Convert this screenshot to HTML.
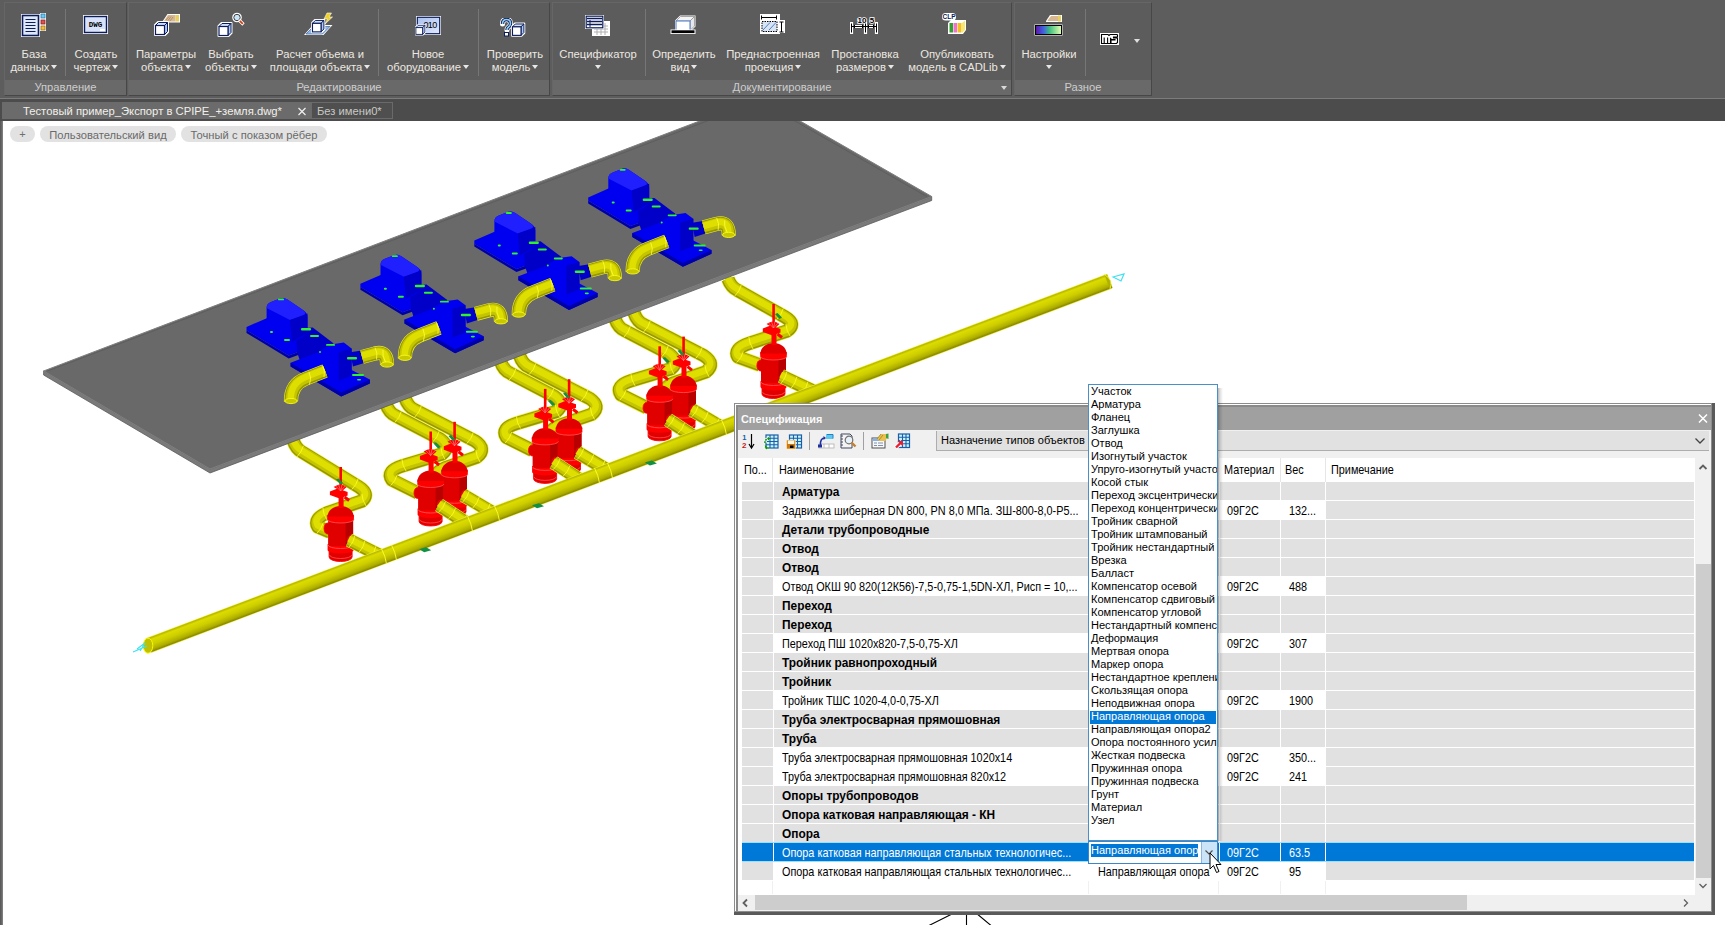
<!DOCTYPE html>
<html><head><meta charset="utf-8">
<style>
*{box-sizing:border-box}
html,body{margin:0;padding:0}
body{width:1725px;height:925px;overflow:hidden;position:relative;background:#fff;font-family:"Liberation Sans",sans-serif}
.a{position:absolute}
#ribbon{left:0;top:0;width:1725px;height:98px;background:#5d5d5d}
.panel{position:absolute;top:2px;height:94px;background:#5c5c5c;border:1px solid #474747;border-top-color:#666;border-left-color:#666}
.plabel{position:absolute;left:0;right:0;bottom:0;height:15px;background:#696969;color:#cdcdcd;font-size:11.2px;text-align:center;line-height:15px}
.btn{position:absolute;color:#ece8e0;font-size:11.25px;line-height:13px;text-align:center;white-space:nowrap}
.sep{position:absolute;top:9px;width:1px;height:67px;background:#767676}
.arr{display:inline-block;width:0;height:0;border-left:3.5px solid transparent;border-right:3.5px solid transparent;border-top:4px solid #e8e8e8;vertical-align:2px;margin-left:2px}
#tabbar{left:0;top:98px;width:1725px;height:23px;background:#4b4b4b;border-top:1px solid #7a7a7a}
.t11{font-size:10.85px;line-height:15px;white-space:nowrap;color:#000;transform:scaleY(1.1);transform-origin:0 0}
.tb{font-size:11.9px;font-weight:bold;line-height:15px;white-space:nowrap;color:#000}
.dd{font-size:11.05px;line-height:13px;white-space:nowrap;color:#000}
</style></head>
<body>
<div id="ribbon" class="a">
  <div class="panel" style="left:4px;width:123px"><div class="plabel">Управление</div></div>
  <div class="panel" style="left:128px;width:422px"><div class="plabel">Редактирование</div></div>
  <div class="panel" style="left:552px;width:460px"><div class="plabel">Документирование<span style="position:absolute;right:4px;top:6px;border-left:3.5px solid transparent;border-right:3.5px solid transparent;border-top:4px solid #d8d8d8"></span></div></div>
  <div class="panel" style="left:1014px;width:138px"><div class="plabel">Разное</div></div>
  <div class="sep" style="left:65px"></div>
  <div class="sep" style="left:378px"></div>
  <div class="sep" style="left:478px"></div>
  <div class="sep" style="left:645px"></div>
  <div class="sep" style="left:1085px"></div>

  <div class="btn" style="left:4px;width:60px;top:48px">База<br>данных<span class="arr"></span></div>
  <div class="btn" style="left:66px;width:60px;top:48px">Создать<br>чертеж<span class="arr"></span></div>
  <div class="btn" style="left:131px;width:70px;top:48px">Параметры<br>объекта<span class="arr"></span></div>
  <div class="btn" style="left:199px;width:64px;top:48px">Выбрать<br>объекты<span class="arr"></span></div>
  <div class="btn" style="left:260px;width:120px;top:48px">Расчет объема и<br>площади объекта<span class="arr"></span></div>
  <div class="btn" style="left:380px;width:96px;top:48px">Новое<br>оборудование<span class="arr"></span></div>
  <div class="btn" style="left:480px;width:70px;top:48px">Проверить<br>модель<span class="arr"></span></div>
  <div class="btn" style="left:553px;width:90px;top:48px">Спецификатор<br><span class="arr" style="margin-left:0"></span></div>
  <div class="btn" style="left:646px;width:76px;top:48px">Определить<br>вид<span class="arr"></span></div>
  <div class="btn" style="left:718px;width:110px;top:48px">Преднастроенная<br>проекция<span class="arr"></span></div>
  <div class="btn" style="left:820px;width:90px;top:48px">Простановка<br>размеров<span class="arr"></span></div>
  <div class="btn" style="left:902px;width:110px;top:48px">Опубликовать<br>модель в CADLib<span class="arr"></span></div>
  <div class="btn" style="left:1014px;width:70px;top:48px">Настройки<br><span class="arr" style="margin-left:0"></span></div>
  <span class="a" style="left:1134px;top:39px;border-left:3.5px solid transparent;border-right:3.5px solid transparent;border-top:4px solid #e0e0e0"></span>

  <!-- icons -->
  <svg class="a" style="left:20px;top:12px" width="28" height="27" viewBox="0 0 28 27">
    <rect x="1" y="2" width="19" height="23" fill="#fff"/>
    <rect x="2.5" y="3.5" width="16" height="20" fill="#dfe8f8" stroke="#0c1c5a" stroke-width="1.6"/>
    <path d="M5.5 7.5h10M5.5 10.5h10M5.5 13.5h10M5.5 16.5h10M5.5 19.5h10" stroke="#0c1c5a" stroke-width="1.2"/>
    <rect x="20" y="1" width="6" height="18" fill="#fff"/>
    <rect x="21" y="2" width="4" height="4" fill="#6cc8f0" stroke="#2a7ab0" stroke-width=".8"/>
    <rect x="21" y="8" width="4" height="4" fill="#e05050" stroke="#902020" stroke-width=".8"/>
    <rect x="21" y="14" width="4" height="4" fill="#f0c040" stroke="#a07010" stroke-width=".8"/>
  </svg>
  <svg class="a" style="left:83px;top:15px" width="26" height="20" viewBox="0 0 26 20">
    <rect x="0" y="0" width="25" height="19" fill="#fff"/>
    <rect x="1.5" y="1.5" width="22" height="16" fill="#d8e2f8" stroke="#0c1c5a" stroke-width="1.4"/>
    <text x="12.5" y="12" font-family="Liberation Mono" font-weight="bold" font-size="7.5" text-anchor="middle" fill="#000">DWG</text>
    <rect x="17" y="14" width="5" height="2" fill="#fff"/>
  </svg>
  <svg class="a" style="left:153px;top:12px" width="28" height="25" viewBox="0 0 28 25">
    <path d="M9.5 9.5 L14.5 2 H27 V10.5 H11Z" fill="#fff"/>
    <path d="M11 9 L15 3 H22.5 V9.5 H12Z" fill="#d8b890"/>
    <path d="M13 8 L16 4.5 M15 8.5 L18 4.5 M17 9 L20 5" stroke="#a08060" stroke-width=".7"/>
    <rect x="22.5" y="3" width="3.5" height="6.5" fill="#e8d060"/>
    <g transform="translate(2,10) scale(1.0)">
    <polygon points="0,3 3,0 13,0 13,10 10,13 0,13" fill="#fff" stroke="#fff" stroke-width="2" stroke-linejoin="round"/>
    <polygon points="0.5,3.5 3.5,0.5 12.5,0.5 9.5,3.5" fill="#d0e0f8" stroke="#0c1c5a" stroke-width="1"/>
    <polygon points="9.5,3.5 12.5,0.5 12.5,9.5 9.5,12.5" fill="#b0c8f0" stroke="#0c1c5a" stroke-width="1"/>
    <rect x="0.5" y="3.5" width="9" height="9" fill="#fff" stroke="#0c1c5a" stroke-width="1.2"/>
  </g>
  </svg>
  <svg class="a" style="left:217px;top:12px" width="28" height="25" viewBox="0 0 28 25">
    <circle cx="20" cy="5.5" r="4.8" fill="#fff"/>
    <circle cx="20" cy="5.5" r="3.2" fill="#c8e4f8" stroke="#404040" stroke-width="1"/>
    <path d="M22 8 L26.5 12.5" stroke="#fff" stroke-width="3.2"/>
    <path d="M22.8 8.8 L25.8 11.8" stroke="#d04010" stroke-width="1.8"/>
    <g transform="translate(1.5,11) scale(1.0)">
    <polygon points="0,3 3,0 13,0 13,10 10,13 0,13" fill="#fff" stroke="#fff" stroke-width="2" stroke-linejoin="round"/>
    <polygon points="0.5,3.5 3.5,0.5 12.5,0.5 9.5,3.5" fill="#d0e0f8" stroke="#0c1c5a" stroke-width="1"/>
    <polygon points="9.5,3.5 12.5,0.5 12.5,9.5 9.5,12.5" fill="#b0c8f0" stroke="#0c1c5a" stroke-width="1"/>
    <rect x="0.5" y="3.5" width="9" height="9" fill="#fff" stroke="#0c1c5a" stroke-width="1.2"/>
  </g>
  </svg>
  <svg class="a" style="left:304px;top:12px" width="30" height="24" viewBox="0 0 30 24">
    <path d="M0 23 L9 13 H28.5 L19.5 23Z" fill="#fff"/>
    <path d="M2 22 L9.5 14.5 H26 L18.5 22Z" fill="#90b8f0" stroke="#5070a0" stroke-width=".8"/>
    <g transform="translate(8,8) scale(0.95)">
    <polygon points="0,3 3,0 13,0 13,10 10,13 0,13" fill="#fff" stroke="#fff" stroke-width="2" stroke-linejoin="round"/>
    <polygon points="0.5,3.5 3.5,0.5 12.5,0.5 9.5,3.5" fill="#d0e0f8" stroke="#0c1c5a" stroke-width="1"/>
    <polygon points="9.5,3.5 12.5,0.5 12.5,9.5 9.5,12.5" fill="#b0c8f0" stroke="#0c1c5a" stroke-width="1"/>
    <rect x="0.5" y="3.5" width="9" height="9" fill="#fff" stroke="#0c1c5a" stroke-width="1.2"/>
  </g>
    <path d="M23 1 L27.5 1 L25 5 H28.5 L21 12 L23.5 7 H20Z" fill="#f0d020" stroke="#fff" stroke-width=".6"/>
  </svg>
  <svg class="a" style="left:415px;top:16px" width="27" height="20" viewBox="0 0 27 20">
    <rect x="1" y="0" width="25" height="19" fill="#fff"/>
    <defs><linearGradient id="g010" x1="0" y1="0" x2="1" y2="1"><stop offset="0" stop-color="#a8c0f0"/><stop offset="1" stop-color="#e0e8fc"/></linearGradient></defs>
    <rect x="2.3" y="1.3" width="22.4" height="16.4" fill="url(#g010)" stroke="#0c1c5a" stroke-width="1.2"/>
    <text x="15" y="11.5" font-family="Liberation Sans" font-size="9" text-anchor="middle" fill="#000" letter-spacing="-0.6">010</text>
    <g transform="translate(0.5,9) scale(0.75)">
    <polygon points="0,3 3,0 13,0 13,10 10,13 0,13" fill="#fff" stroke="#fff" stroke-width="2" stroke-linejoin="round"/>
    <polygon points="0.5,3.5 3.5,0.5 12.5,0.5 9.5,3.5" fill="#d0e0f8" stroke="#0c1c5a" stroke-width="1"/>
    <polygon points="9.5,3.5 12.5,0.5 12.5,9.5 9.5,12.5" fill="#b0c8f0" stroke="#0c1c5a" stroke-width="1"/>
    <rect x="0.5" y="3.5" width="9" height="9" fill="#fff" stroke="#0c1c5a" stroke-width="1.2"/>
  </g>
  </svg>
  <svg class="a" style="left:500px;top:18px" width="27" height="20" viewBox="0 0 27 20">
    <path d="M2.5 6 Q2.5 1.5 6.5 1.5 Q10.5 1.5 10.5 5.5 Q10.5 8 8 9.5 Q7 10.2 7 12" fill="none" stroke="#fff" stroke-width="5" stroke-linecap="round"/>
    <path d="M2.5 6 Q2.5 1.5 6.5 1.5 Q10.5 1.5 10.5 5.5 Q10.5 8 8 9.5 Q7 10.2 7 12" fill="none" stroke="#0c1c5a" stroke-width="3.4" stroke-linecap="butt"/>
    <path d="M2.5 6 Q2.5 1.5 6.5 1.5 Q10.5 1.5 10.5 5.5 Q10.5 8 8 9.5 Q7 10.2 7 12" fill="none" stroke="#90d0f0" stroke-width="1.6"/>
    <rect x="4.5" y="14.5" width="4" height="3.5" fill="#fff" stroke="#0c1c5a" stroke-width="1"/>
    <g transform="translate(12,5.5) scale(0.95)">
    <polygon points="0,3 3,0 13,0 13,10 10,13 0,13" fill="#fff" stroke="#fff" stroke-width="2" stroke-linejoin="round"/>
    <polygon points="0.5,3.5 3.5,0.5 12.5,0.5 9.5,3.5" fill="#d0e0f8" stroke="#0c1c5a" stroke-width="1"/>
    <polygon points="9.5,3.5 12.5,0.5 12.5,9.5 9.5,12.5" fill="#b0c8f0" stroke="#0c1c5a" stroke-width="1"/>
    <rect x="0.5" y="3.5" width="9" height="9" fill="#fff" stroke="#0c1c5a" stroke-width="1.2"/>
  </g>
  </svg>
  <svg class="a" style="left:585px;top:15px" width="25" height="21" viewBox="0 0 25 21">
    <rect x="7" y="6" width="18" height="15" fill="#fff"/>
    <path d="M9 11h14M9 14h14M9 17h14M12 8v12M16 8v12M20 8v12" stroke="#b0b0b0" stroke-width="1"/>
    <rect x="0" y="0" width="19" height="14" fill="#fff"/>
    <rect x="1.2" y="1.2" width="16.6" height="11.6" fill="#fff" stroke="#0c1c5a" stroke-width="1.2"/>
    <path d="M2 3.5h15M2 6.5h15M2 9.5h15" stroke="#0c1c5a" stroke-width="1.6"/>
    <path d="M5 5v7" stroke="#0c1c5a" stroke-width="1"/>
  </svg>
  <svg class="a" style="left:670px;top:15px" width="26" height="19" viewBox="0 0 26 19">
    <path d="M6 14 L6 6 L10.5 1.5 H24.5 V11 L20 15.5Z" fill="#fff" stroke="#fff" stroke-width="2"/>
    <path d="M6 6 L10.5 1.5 H24.5 L20 6Z" fill="#f4f4f4" stroke="#909090" stroke-width=".8"/>
    <path d="M20 6 L24.5 1.5 V11 L20 15.5Z" fill="#e8e8e8" stroke="#909090" stroke-width=".8"/>
    <rect x="6" y="6" width="14" height="9.5" fill="#fff" stroke="#4878c8" stroke-width="1"/>
    <rect x="0.5" y="14.5" width="25" height="4.5" fill="#fff"/>
    <rect x="1.5" y="15.3" width="23" height="2.8" fill="#000"/>
  </svg>
  <svg class="a" style="left:760px;top:14px" width="25" height="20" viewBox="0 0 25 20">
    <rect x="0" y="0" width="20" height="20" fill="#fff"/>
    <rect x="19" y="6" width="6" height="13" fill="#fff"/>
    <path d="M1.5 3.5h15M1.5 1.5v4M16.5 1.5v4" stroke="#000" stroke-width="1"/>
    <rect x="2" y="7.5" width="15" height="10" fill="#d8e4f4" stroke="#000" stroke-width="1" stroke-dasharray="1.5 1"/>
    <path d="M3 16 L10 8.5 M9 16 L16 8.5" stroke="#5080c0" stroke-width="1"/>
    <path d="M21.5 8v10M19.5 8h4M19.5 18h4" stroke="#000" stroke-width="1"/>
  </svg>
  <svg class="a" style="left:850px;top:15px" width="28" height="19" viewBox="0 0 28 19">
    <g stroke="#fff" stroke-width="3.2" fill="none" stroke-linecap="square">
      <path d="M1.5 8.5v9M15.5 8.5v9M26.5 8.5v9M2 11.5h13M16 11.5h10"/>
    </g>
    <text x="12" y="7.5" font-family="Liberation Sans" font-weight="bold" font-size="8" text-anchor="middle" fill="#000" stroke="#fff" stroke-width="1.6" paint-order="stroke">10</text>
    <text x="22" y="7.5" font-family="Liberation Sans" font-weight="bold" font-size="8" text-anchor="middle" fill="#000" stroke="#fff" stroke-width="1.6" paint-order="stroke">5</text>
    <path d="M1.5 8.5v9M15.5 8.5v9M26.5 8.5v9M2 11.5h13M16 11.5h10" stroke="#000" stroke-width="1"/>
    <path d="M2 11.5 L5 9.5 V13.5Z M15 11.5 L12 9.5 V13.5Z M16 11.5 L19 9.5 V13.5Z M26 11.5 L23 9.5 V13.5Z" fill="#000"/>
  </svg>
  <svg class="a" style="left:942px;top:13px" width="26" height="22" viewBox="0 0 26 22">
    <rect x="0" y="0" width="14" height="7.5" rx="3.5" fill="#fff"/>
    <text x="7" y="6.3" font-family="Liberation Sans" font-weight="bold" font-size="6.5" text-anchor="middle" fill="#0c1c5a">CLP</text>
    <path d="M6 10 L9 7 H24 V17 L21 21 H6Z" fill="#fff"/>
    <rect x="7.5" y="10" width="3.5" height="9.5" fill="#30a030"/>
    <rect x="11.5" y="10" width="3.5" height="9.5" fill="#f070d0"/>
    <rect x="15.5" y="10" width="4" height="9.5" fill="#f0c020"/>
    <path d="M20 10 L23 7.5 V17 L20 20Z" fill="#f8e870"/>
  </svg>
  <svg class="a" style="left:1034px;top:12px" width="29" height="24" viewBox="0 0 29 24">
    <path d="M12 9 L16 3 H28 V10 H12Z" fill="#fff"/>
    <path d="M13.5 8.5 L17 4 H24 V9 H14Z" fill="#d8b890"/>
    <rect x="24" y="3.5" width="3" height="6" fill="#e8d060"/>
    <rect x="0.5" y="12.5" width="28" height="11" fill="#fff"/>
    <defs><linearGradient id="gr" x1="0" x2="1"><stop offset="0" stop-color="#6010a0"/><stop offset=".3" stop-color="#4060e0"/><stop offset=".55" stop-color="#40c080"/><stop offset="1" stop-color="#e8ffb0"/></linearGradient></defs>
    <rect x="1.5" y="13.5" width="26" height="9" fill="url(#gr)" stroke="#000" stroke-width="1"/>
  </svg>
  <svg class="a" style="left:1100px;top:33px" width="19" height="12" viewBox="0 0 19 12">
    <rect x="0" y="0" width="19" height="12" fill="#fff"/>
    <path d="M1.5 1.5 H8 L9 2.5 L10 1.5 H17 L17.5 2 V4 H13.5 V5 H17 L17.5 5.5 V9.5 L16.5 10.5 H11 V7 H15 V6.5 H11.5 L10.5 5.5 V10.5 H1.5Z" fill="#fff" stroke="#000" stroke-width="1.1" stroke-linejoin="miter"/>
    <path d="M4.2 4.5 V10.5 M7.6 4.5 V10.5" stroke="#000" stroke-width="1.1"/>
  </svg>
</div>

<div class="a" style="left:0;top:98px;width:1725px;height:1px;background:#7c7c7c"></div>
<div class="a" style="left:0;top:99px;width:1725px;height:22px;background:#4c4c4c"></div>
<div class="a" style="left:2px;top:102px;width:309px;height:17px;background:#6b6b6b;color:#f2f0ea;font-size:11.25px;line-height:19px;padding-left:21px;white-space:nowrap">Тестовый пример_Экспорт в CPIPE_+земля.dwg*</div>
<svg class="a" style="left:297px;top:107px" width="10" height="9" viewBox="0 0 10 9"><path d="M1.5 1 L8.5 8 M8.5 1 L1.5 8" stroke="#f0f0f0" stroke-width="1.2"/></svg>
<div class="a" style="left:311px;top:102px;width:82px;height:17px;background:#4f4f4f;border:1px solid #6a6a6a;color:#c8c8c4;font-size:11.2px;line-height:17px;padding-left:5px;white-space:nowrap">Без имени0*</div>
<div class="a" style="left:0;top:121px;width:3px;height:804px;background:linear-gradient(90deg,#555,#6a6a6a 60%,#8a8a8a)"></div>
<div class="a" style="left:10px;top:126px;width:25px;height:16px;border-radius:8px;background:#e2e2e2;color:#707070;font-size:11px;line-height:17px;text-align:center">+</div>
<div class="a" style="left:40px;top:126px;width:136px;height:16px;border-radius:8px;background:#e2e2e2;color:#6a6a6a;font-size:11.2px;line-height:18px;text-align:center;white-space:nowrap">Пользовательский вид</div>
<div class="a" style="left:181px;top:126px;width:146px;height:16px;border-radius:8px;background:#e2e2e2;color:#6a6a6a;font-size:11.2px;line-height:18px;text-align:center;white-space:nowrap">Точный с показом рёбер</div>
<svg class="a" style="left:0;top:0" width="1725" height="925" viewBox="0 0 1725 925">
<defs><clipPath id="cv"><rect x="3" y="121" width="1722" height="804"/></clipPath></defs>
<g clip-path="url(#cv)">
<g transform="translate(229.0,-85.2)">
<path d="M405,398 Q408,407 415,410 L475,441 Q487,449 477,457 L445,468 Q431,474 437,482 L445,487" fill="none" stroke="#ecec30" stroke-width="14.2" stroke-linejoin="round"/><path d="M405,398 Q408,407 415,410 L475,441 Q487,449 477,457 L445,468 Q431,474 437,482 L445,487" fill="none" stroke="#969600" stroke-width="13" stroke-linejoin="round"/><path d="M405,398 Q408,407 415,410 L475,441 Q487,449 477,457 L445,468 Q431,474 437,482 L445,487" fill="none" stroke="#c4c400" stroke-width="10.6" stroke-linejoin="round" transform="translate(0,-0.4)"/><path d="M405,398 Q408,407 415,410 L475,441 Q487,449 477,457 L445,468 Q431,474 437,482 L445,487" fill="none" stroke="#dede00" stroke-width="6.5" stroke-linejoin="round" transform="translate(-0.3,-1.4)"/>
<path d="M421.3,405.9 Q419.6,412.4 414.7,417.1" stroke="#ffff30" stroke-width="0.8" fill="none"/>
<path d="M473.3,432.4 Q471.6,438.9 466.7,443.6" stroke="#ffff30" stroke-width="0.8" fill="none"/>
<path d="M480.1,462.1 Q476.3,456.6 475.9,449.9" stroke="#ffff30" stroke-width="0.8" fill="none"/>
<path d="M386,404 Q389,413 396,416 L440,439 Q451,447 442,454 L402,466 Q386,471 392,480 L418,493" fill="none" stroke="#ecec30" stroke-width="14.2" stroke-linejoin="round"/><path d="M386,404 Q389,413 396,416 L440,439 Q451,447 442,454 L402,466 Q386,471 392,480 L418,493" fill="none" stroke="#969600" stroke-width="13" stroke-linejoin="round"/><path d="M386,404 Q389,413 396,416 L440,439 Q451,447 442,454 L402,466 Q386,471 392,480 L418,493" fill="none" stroke="#c4c400" stroke-width="10.6" stroke-linejoin="round" transform="translate(0,-0.4)"/><path d="M386,404 Q389,413 396,416 L440,439 Q451,447 442,454 L402,466 Q386,471 392,480 L418,493" fill="none" stroke="#dede00" stroke-width="6.5" stroke-linejoin="round" transform="translate(-0.3,-1.4)"/>
<path d="M401.3,411.4 Q399.6,417.9 394.7,422.6" stroke="#ffff30" stroke-width="0.8" fill="none"/>
<path d="M439.3,430.9 Q437.6,437.4 432.7,442.1" stroke="#ffff30" stroke-width="0.8" fill="none"/>
<path d="M445.1,459.6 Q441.3,454.1 440.9,447.4" stroke="#ffff30" stroke-width="0.8" fill="none"/>
<path d="M406.1,471.1 Q402.3,465.6 401.9,458.9" stroke="#ffff30" stroke-width="0.8" fill="none"/>
<path d="M397.3,474.4 Q395.6,480.9 390.7,485.6" stroke="#ffff30" stroke-width="0.8" fill="none"/>
<ellipse cx="441.5" cy="483.3" rx="3.6" ry="5.5" fill="#e00000" stroke="#ff0000" stroke-width="0.8"/>
<path d="M443.0,504.8 h23 v7 a11.5,4.5 0 0 1 -23,0 z" fill="#e00000" stroke="#ff0000" stroke-width="0.9"/>
<path d="M441.5,498.8 h26 v6 a13,3.5 0 0 1 -26,0 z" fill="#ff0000"/>
<path d="M443.5,509.8 a11,3.5 0 0 0 22,0" fill="none" stroke="#ff5050" stroke-width="0.8"/>
<rect x="442.0" y="473.8" width="25" height="27" fill="#e00000"/>
<rect x="459.5" y="473.8" width="7.5" height="27" fill="#b80000"/>
<path d="M442.0,499.8 a12.5,3.5 0 0 0 25,0" fill="none" stroke="#ff5050" stroke-width="0.9"/>
<path d="M441.2,469.8 h26.6 v4.5 a13.3,3.5 0 0 1 -26.6,0 z" fill="#ff0000"/>
<path d="M441.2,474.3 a13.3,3.5 0 0 0 26.6,0" fill="none" stroke="#ff6060" stroke-width="0.7"/>
<path d="M441.5,471.3 a13,10.5 0 0 1 26,0 z" fill="#e00000"/>
<path d="M441.5,471.3 a13,3.5 0 0 0 26,0" fill="none" stroke="#ff0000" stroke-width="1"/>
<ellipse cx="465.0" cy="495.3" rx="3.8" ry="5" fill="#e00000" stroke="#ff0000" stroke-width="0.8"/>
<rect x="452.5" y="449.8" width="5" height="13" fill="#ff0000"/>
<rect x="453.3" y="421.8" width="2.6" height="30" fill="#ff0000"/>
<polygon points="443.8,446.3 451.5,443.3 461.5,446.8 461.5,450.3 453.5,453.3 443.8,449.8" fill="#ff0000"/>
<path d="M458.5,451.8 L463.0,455.3" stroke="#ff0000" stroke-width="3"/>
<path d="M447.5,441.8 Q454.5,436.8 460.5,441.8 L455.5,446.3 Z" fill="#ff0000"/>
<path d="M449.5,440.8 L454.5,445.8 M452.5,439.3 L454.5,445.8 M456.0,439.3 L454.5,445.8 M459.0,440.8 L454.5,445.8" stroke="#ff9090" stroke-width="0.6"/>
<path d="M463,495 L495,514" fill="none" stroke="#ecec30" stroke-width="14.2" stroke-linejoin="round"/><path d="M463,495 L495,514" fill="none" stroke="#969600" stroke-width="13" stroke-linejoin="round"/><path d="M463,495 L495,514" fill="none" stroke="#c4c400" stroke-width="10.6" stroke-linejoin="round" transform="translate(0,-0.4)"/><path d="M463,495 L495,514" fill="none" stroke="#dede00" stroke-width="6.5" stroke-linejoin="round" transform="translate(-0.3,-1.4)"/>
<path d="M469.3,490.9 Q467.5,497.4 462.7,502.1" stroke="#ffff30" stroke-width="0.8" fill="none"/>
<path d="M479.3,496.9 Q477.5,503.4 472.7,508.1" stroke="#ffff30" stroke-width="0.8" fill="none"/>
<path d="M490.3,503.4 Q488.5,509.9 483.7,514.6" stroke="#ffff30" stroke-width="0.8" fill="none"/>
<ellipse cx="417.6" cy="493.0" rx="3.6" ry="5.5" fill="#e00000" stroke="#ff0000" stroke-width="0.8"/>
<path d="M419.1,514.5 h23 v7 a11.5,4.5 0 0 1 -23,0 z" fill="#e00000" stroke="#ff0000" stroke-width="0.9"/>
<path d="M417.6,508.5 h26 v6 a13,3.5 0 0 1 -26,0 z" fill="#ff0000"/>
<path d="M419.6,519.5 a11,3.5 0 0 0 22,0" fill="none" stroke="#ff5050" stroke-width="0.8"/>
<rect x="418.1" y="483.5" width="25" height="27" fill="#e00000"/>
<rect x="435.6" y="483.5" width="7.5" height="27" fill="#b80000"/>
<path d="M418.1,509.5 a12.5,3.5 0 0 0 25,0" fill="none" stroke="#ff5050" stroke-width="0.9"/>
<path d="M417.3,479.5 h26.6 v4.5 a13.3,3.5 0 0 1 -26.6,0 z" fill="#ff0000"/>
<path d="M417.3,484.0 a13.3,3.5 0 0 0 26.6,0" fill="none" stroke="#ff6060" stroke-width="0.7"/>
<path d="M417.6,481.0 a13,10.5 0 0 1 26,0 z" fill="#e00000"/>
<path d="M417.6,481.0 a13,3.5 0 0 0 26,0" fill="none" stroke="#ff0000" stroke-width="1"/>
<ellipse cx="441.1" cy="505.0" rx="3.8" ry="5" fill="#e00000" stroke="#ff0000" stroke-width="0.8"/>
<rect x="428.6" y="459.5" width="5" height="13" fill="#ff0000"/>
<rect x="429.40000000000003" y="431.5" width="2.6" height="30" fill="#ff0000"/>
<polygon points="419.90000000000003,456.0 427.6,453.0 437.6,456.5 437.6,460.0 429.6,463.0 419.90000000000003,459.5" fill="#ff0000"/>
<path d="M434.6,461.5 L439.1,465.0" stroke="#ff0000" stroke-width="3"/>
<path d="M423.6,451.5 Q430.6,446.5 436.6,451.5 L431.6,456.0 Z" fill="#ff0000"/>
<path d="M425.6,450.5 L430.6,455.5 M428.6,449.0 L430.6,455.5 M432.1,449.0 L430.6,455.5 M435.1,450.5 L430.6,455.5" stroke="#ff9090" stroke-width="0.6"/>
<path d="M439,505 L471,526" fill="none" stroke="#ecec30" stroke-width="14.2" stroke-linejoin="round"/><path d="M439,505 L471,526" fill="none" stroke="#969600" stroke-width="13" stroke-linejoin="round"/><path d="M439,505 L471,526" fill="none" stroke="#c4c400" stroke-width="10.6" stroke-linejoin="round" transform="translate(0,-0.4)"/><path d="M439,505 L471,526" fill="none" stroke="#dede00" stroke-width="6.5" stroke-linejoin="round" transform="translate(-0.3,-1.4)"/>
<path d="M445.5,501.6 Q443.5,508.0 438.5,512.4" stroke="#ffff30" stroke-width="0.8" fill="none"/>
<path d="M455.5,508.1 Q453.5,514.5 448.5,518.9" stroke="#ffff30" stroke-width="0.8" fill="none"/>
<path d="M466.5,515.1 Q464.5,521.5 459.5,525.9" stroke="#ffff30" stroke-width="0.8" fill="none"/>
</g>
<g transform="translate(114.5,-42.6)">
<path d="M405,398 Q408,407 415,410 L475,441 Q487,449 477,457 L445,468 Q431,474 437,482 L445,487" fill="none" stroke="#ecec30" stroke-width="14.2" stroke-linejoin="round"/><path d="M405,398 Q408,407 415,410 L475,441 Q487,449 477,457 L445,468 Q431,474 437,482 L445,487" fill="none" stroke="#969600" stroke-width="13" stroke-linejoin="round"/><path d="M405,398 Q408,407 415,410 L475,441 Q487,449 477,457 L445,468 Q431,474 437,482 L445,487" fill="none" stroke="#c4c400" stroke-width="10.6" stroke-linejoin="round" transform="translate(0,-0.4)"/><path d="M405,398 Q408,407 415,410 L475,441 Q487,449 477,457 L445,468 Q431,474 437,482 L445,487" fill="none" stroke="#dede00" stroke-width="6.5" stroke-linejoin="round" transform="translate(-0.3,-1.4)"/>
<path d="M421.3,405.9 Q419.6,412.4 414.7,417.1" stroke="#ffff30" stroke-width="0.8" fill="none"/>
<path d="M473.3,432.4 Q471.6,438.9 466.7,443.6" stroke="#ffff30" stroke-width="0.8" fill="none"/>
<path d="M480.1,462.1 Q476.3,456.6 475.9,449.9" stroke="#ffff30" stroke-width="0.8" fill="none"/>
<path d="M386,404 Q389,413 396,416 L440,439 Q451,447 442,454 L402,466 Q386,471 392,480 L418,493" fill="none" stroke="#ecec30" stroke-width="14.2" stroke-linejoin="round"/><path d="M386,404 Q389,413 396,416 L440,439 Q451,447 442,454 L402,466 Q386,471 392,480 L418,493" fill="none" stroke="#969600" stroke-width="13" stroke-linejoin="round"/><path d="M386,404 Q389,413 396,416 L440,439 Q451,447 442,454 L402,466 Q386,471 392,480 L418,493" fill="none" stroke="#c4c400" stroke-width="10.6" stroke-linejoin="round" transform="translate(0,-0.4)"/><path d="M386,404 Q389,413 396,416 L440,439 Q451,447 442,454 L402,466 Q386,471 392,480 L418,493" fill="none" stroke="#dede00" stroke-width="6.5" stroke-linejoin="round" transform="translate(-0.3,-1.4)"/>
<path d="M401.3,411.4 Q399.6,417.9 394.7,422.6" stroke="#ffff30" stroke-width="0.8" fill="none"/>
<path d="M439.3,430.9 Q437.6,437.4 432.7,442.1" stroke="#ffff30" stroke-width="0.8" fill="none"/>
<path d="M445.1,459.6 Q441.3,454.1 440.9,447.4" stroke="#ffff30" stroke-width="0.8" fill="none"/>
<path d="M406.1,471.1 Q402.3,465.6 401.9,458.9" stroke="#ffff30" stroke-width="0.8" fill="none"/>
<path d="M397.3,474.4 Q395.6,480.9 390.7,485.6" stroke="#ffff30" stroke-width="0.8" fill="none"/>
<ellipse cx="441.5" cy="483.3" rx="3.6" ry="5.5" fill="#e00000" stroke="#ff0000" stroke-width="0.8"/>
<path d="M443.0,504.8 h23 v7 a11.5,4.5 0 0 1 -23,0 z" fill="#e00000" stroke="#ff0000" stroke-width="0.9"/>
<path d="M441.5,498.8 h26 v6 a13,3.5 0 0 1 -26,0 z" fill="#ff0000"/>
<path d="M443.5,509.8 a11,3.5 0 0 0 22,0" fill="none" stroke="#ff5050" stroke-width="0.8"/>
<rect x="442.0" y="473.8" width="25" height="27" fill="#e00000"/>
<rect x="459.5" y="473.8" width="7.5" height="27" fill="#b80000"/>
<path d="M442.0,499.8 a12.5,3.5 0 0 0 25,0" fill="none" stroke="#ff5050" stroke-width="0.9"/>
<path d="M441.2,469.8 h26.6 v4.5 a13.3,3.5 0 0 1 -26.6,0 z" fill="#ff0000"/>
<path d="M441.2,474.3 a13.3,3.5 0 0 0 26.6,0" fill="none" stroke="#ff6060" stroke-width="0.7"/>
<path d="M441.5,471.3 a13,10.5 0 0 1 26,0 z" fill="#e00000"/>
<path d="M441.5,471.3 a13,3.5 0 0 0 26,0" fill="none" stroke="#ff0000" stroke-width="1"/>
<ellipse cx="465.0" cy="495.3" rx="3.8" ry="5" fill="#e00000" stroke="#ff0000" stroke-width="0.8"/>
<rect x="452.5" y="449.8" width="5" height="13" fill="#ff0000"/>
<rect x="453.3" y="421.8" width="2.6" height="30" fill="#ff0000"/>
<polygon points="443.8,446.3 451.5,443.3 461.5,446.8 461.5,450.3 453.5,453.3 443.8,449.8" fill="#ff0000"/>
<path d="M458.5,451.8 L463.0,455.3" stroke="#ff0000" stroke-width="3"/>
<path d="M447.5,441.8 Q454.5,436.8 460.5,441.8 L455.5,446.3 Z" fill="#ff0000"/>
<path d="M449.5,440.8 L454.5,445.8 M452.5,439.3 L454.5,445.8 M456.0,439.3 L454.5,445.8 M459.0,440.8 L454.5,445.8" stroke="#ff9090" stroke-width="0.6"/>
<path d="M463,495 L495,514" fill="none" stroke="#ecec30" stroke-width="14.2" stroke-linejoin="round"/><path d="M463,495 L495,514" fill="none" stroke="#969600" stroke-width="13" stroke-linejoin="round"/><path d="M463,495 L495,514" fill="none" stroke="#c4c400" stroke-width="10.6" stroke-linejoin="round" transform="translate(0,-0.4)"/><path d="M463,495 L495,514" fill="none" stroke="#dede00" stroke-width="6.5" stroke-linejoin="round" transform="translate(-0.3,-1.4)"/>
<path d="M469.3,490.9 Q467.5,497.4 462.7,502.1" stroke="#ffff30" stroke-width="0.8" fill="none"/>
<path d="M479.3,496.9 Q477.5,503.4 472.7,508.1" stroke="#ffff30" stroke-width="0.8" fill="none"/>
<path d="M490.3,503.4 Q488.5,509.9 483.7,514.6" stroke="#ffff30" stroke-width="0.8" fill="none"/>
<ellipse cx="417.6" cy="493.0" rx="3.6" ry="5.5" fill="#e00000" stroke="#ff0000" stroke-width="0.8"/>
<path d="M419.1,514.5 h23 v7 a11.5,4.5 0 0 1 -23,0 z" fill="#e00000" stroke="#ff0000" stroke-width="0.9"/>
<path d="M417.6,508.5 h26 v6 a13,3.5 0 0 1 -26,0 z" fill="#ff0000"/>
<path d="M419.6,519.5 a11,3.5 0 0 0 22,0" fill="none" stroke="#ff5050" stroke-width="0.8"/>
<rect x="418.1" y="483.5" width="25" height="27" fill="#e00000"/>
<rect x="435.6" y="483.5" width="7.5" height="27" fill="#b80000"/>
<path d="M418.1,509.5 a12.5,3.5 0 0 0 25,0" fill="none" stroke="#ff5050" stroke-width="0.9"/>
<path d="M417.3,479.5 h26.6 v4.5 a13.3,3.5 0 0 1 -26.6,0 z" fill="#ff0000"/>
<path d="M417.3,484.0 a13.3,3.5 0 0 0 26.6,0" fill="none" stroke="#ff6060" stroke-width="0.7"/>
<path d="M417.6,481.0 a13,10.5 0 0 1 26,0 z" fill="#e00000"/>
<path d="M417.6,481.0 a13,3.5 0 0 0 26,0" fill="none" stroke="#ff0000" stroke-width="1"/>
<ellipse cx="441.1" cy="505.0" rx="3.8" ry="5" fill="#e00000" stroke="#ff0000" stroke-width="0.8"/>
<rect x="428.6" y="459.5" width="5" height="13" fill="#ff0000"/>
<rect x="429.40000000000003" y="431.5" width="2.6" height="30" fill="#ff0000"/>
<polygon points="419.90000000000003,456.0 427.6,453.0 437.6,456.5 437.6,460.0 429.6,463.0 419.90000000000003,459.5" fill="#ff0000"/>
<path d="M434.6,461.5 L439.1,465.0" stroke="#ff0000" stroke-width="3"/>
<path d="M423.6,451.5 Q430.6,446.5 436.6,451.5 L431.6,456.0 Z" fill="#ff0000"/>
<path d="M425.6,450.5 L430.6,455.5 M428.6,449.0 L430.6,455.5 M432.1,449.0 L430.6,455.5 M435.1,450.5 L430.6,455.5" stroke="#ff9090" stroke-width="0.6"/>
<path d="M439,505 L471,526" fill="none" stroke="#ecec30" stroke-width="14.2" stroke-linejoin="round"/><path d="M439,505 L471,526" fill="none" stroke="#969600" stroke-width="13" stroke-linejoin="round"/><path d="M439,505 L471,526" fill="none" stroke="#c4c400" stroke-width="10.6" stroke-linejoin="round" transform="translate(0,-0.4)"/><path d="M439,505 L471,526" fill="none" stroke="#dede00" stroke-width="6.5" stroke-linejoin="round" transform="translate(-0.3,-1.4)"/>
<path d="M445.5,501.6 Q443.5,508.0 438.5,512.4" stroke="#ffff30" stroke-width="0.8" fill="none"/>
<path d="M455.5,508.1 Q453.5,514.5 448.5,518.9" stroke="#ffff30" stroke-width="0.8" fill="none"/>
<path d="M466.5,515.1 Q464.5,521.5 459.5,525.9" stroke="#ffff30" stroke-width="0.8" fill="none"/>
</g>
<g transform="translate(0.0,0.0)">
<path d="M405,398 Q408,407 415,410 L475,441 Q487,449 477,457 L445,468 Q431,474 437,482 L445,487" fill="none" stroke="#ecec30" stroke-width="14.2" stroke-linejoin="round"/><path d="M405,398 Q408,407 415,410 L475,441 Q487,449 477,457 L445,468 Q431,474 437,482 L445,487" fill="none" stroke="#969600" stroke-width="13" stroke-linejoin="round"/><path d="M405,398 Q408,407 415,410 L475,441 Q487,449 477,457 L445,468 Q431,474 437,482 L445,487" fill="none" stroke="#c4c400" stroke-width="10.6" stroke-linejoin="round" transform="translate(0,-0.4)"/><path d="M405,398 Q408,407 415,410 L475,441 Q487,449 477,457 L445,468 Q431,474 437,482 L445,487" fill="none" stroke="#dede00" stroke-width="6.5" stroke-linejoin="round" transform="translate(-0.3,-1.4)"/>
<path d="M421.3,405.9 Q419.6,412.4 414.7,417.1" stroke="#ffff30" stroke-width="0.8" fill="none"/>
<path d="M473.3,432.4 Q471.6,438.9 466.7,443.6" stroke="#ffff30" stroke-width="0.8" fill="none"/>
<path d="M480.1,462.1 Q476.3,456.6 475.9,449.9" stroke="#ffff30" stroke-width="0.8" fill="none"/>
<path d="M386,404 Q389,413 396,416 L440,439 Q451,447 442,454 L402,466 Q386,471 392,480 L418,493" fill="none" stroke="#ecec30" stroke-width="14.2" stroke-linejoin="round"/><path d="M386,404 Q389,413 396,416 L440,439 Q451,447 442,454 L402,466 Q386,471 392,480 L418,493" fill="none" stroke="#969600" stroke-width="13" stroke-linejoin="round"/><path d="M386,404 Q389,413 396,416 L440,439 Q451,447 442,454 L402,466 Q386,471 392,480 L418,493" fill="none" stroke="#c4c400" stroke-width="10.6" stroke-linejoin="round" transform="translate(0,-0.4)"/><path d="M386,404 Q389,413 396,416 L440,439 Q451,447 442,454 L402,466 Q386,471 392,480 L418,493" fill="none" stroke="#dede00" stroke-width="6.5" stroke-linejoin="round" transform="translate(-0.3,-1.4)"/>
<path d="M401.3,411.4 Q399.6,417.9 394.7,422.6" stroke="#ffff30" stroke-width="0.8" fill="none"/>
<path d="M439.3,430.9 Q437.6,437.4 432.7,442.1" stroke="#ffff30" stroke-width="0.8" fill="none"/>
<path d="M445.1,459.6 Q441.3,454.1 440.9,447.4" stroke="#ffff30" stroke-width="0.8" fill="none"/>
<path d="M406.1,471.1 Q402.3,465.6 401.9,458.9" stroke="#ffff30" stroke-width="0.8" fill="none"/>
<path d="M397.3,474.4 Q395.6,480.9 390.7,485.6" stroke="#ffff30" stroke-width="0.8" fill="none"/>
<ellipse cx="441.5" cy="483.3" rx="3.6" ry="5.5" fill="#e00000" stroke="#ff0000" stroke-width="0.8"/>
<path d="M443.0,504.8 h23 v7 a11.5,4.5 0 0 1 -23,0 z" fill="#e00000" stroke="#ff0000" stroke-width="0.9"/>
<path d="M441.5,498.8 h26 v6 a13,3.5 0 0 1 -26,0 z" fill="#ff0000"/>
<path d="M443.5,509.8 a11,3.5 0 0 0 22,0" fill="none" stroke="#ff5050" stroke-width="0.8"/>
<rect x="442.0" y="473.8" width="25" height="27" fill="#e00000"/>
<rect x="459.5" y="473.8" width="7.5" height="27" fill="#b80000"/>
<path d="M442.0,499.8 a12.5,3.5 0 0 0 25,0" fill="none" stroke="#ff5050" stroke-width="0.9"/>
<path d="M441.2,469.8 h26.6 v4.5 a13.3,3.5 0 0 1 -26.6,0 z" fill="#ff0000"/>
<path d="M441.2,474.3 a13.3,3.5 0 0 0 26.6,0" fill="none" stroke="#ff6060" stroke-width="0.7"/>
<path d="M441.5,471.3 a13,10.5 0 0 1 26,0 z" fill="#e00000"/>
<path d="M441.5,471.3 a13,3.5 0 0 0 26,0" fill="none" stroke="#ff0000" stroke-width="1"/>
<ellipse cx="465.0" cy="495.3" rx="3.8" ry="5" fill="#e00000" stroke="#ff0000" stroke-width="0.8"/>
<rect x="452.5" y="449.8" width="5" height="13" fill="#ff0000"/>
<rect x="453.3" y="421.8" width="2.6" height="30" fill="#ff0000"/>
<polygon points="443.8,446.3 451.5,443.3 461.5,446.8 461.5,450.3 453.5,453.3 443.8,449.8" fill="#ff0000"/>
<path d="M458.5,451.8 L463.0,455.3" stroke="#ff0000" stroke-width="3"/>
<path d="M447.5,441.8 Q454.5,436.8 460.5,441.8 L455.5,446.3 Z" fill="#ff0000"/>
<path d="M449.5,440.8 L454.5,445.8 M452.5,439.3 L454.5,445.8 M456.0,439.3 L454.5,445.8 M459.0,440.8 L454.5,445.8" stroke="#ff9090" stroke-width="0.6"/>
<path d="M463,495 L495,514" fill="none" stroke="#ecec30" stroke-width="14.2" stroke-linejoin="round"/><path d="M463,495 L495,514" fill="none" stroke="#969600" stroke-width="13" stroke-linejoin="round"/><path d="M463,495 L495,514" fill="none" stroke="#c4c400" stroke-width="10.6" stroke-linejoin="round" transform="translate(0,-0.4)"/><path d="M463,495 L495,514" fill="none" stroke="#dede00" stroke-width="6.5" stroke-linejoin="round" transform="translate(-0.3,-1.4)"/>
<path d="M469.3,490.9 Q467.5,497.4 462.7,502.1" stroke="#ffff30" stroke-width="0.8" fill="none"/>
<path d="M479.3,496.9 Q477.5,503.4 472.7,508.1" stroke="#ffff30" stroke-width="0.8" fill="none"/>
<path d="M490.3,503.4 Q488.5,509.9 483.7,514.6" stroke="#ffff30" stroke-width="0.8" fill="none"/>
<ellipse cx="417.6" cy="493.0" rx="3.6" ry="5.5" fill="#e00000" stroke="#ff0000" stroke-width="0.8"/>
<path d="M419.1,514.5 h23 v7 a11.5,4.5 0 0 1 -23,0 z" fill="#e00000" stroke="#ff0000" stroke-width="0.9"/>
<path d="M417.6,508.5 h26 v6 a13,3.5 0 0 1 -26,0 z" fill="#ff0000"/>
<path d="M419.6,519.5 a11,3.5 0 0 0 22,0" fill="none" stroke="#ff5050" stroke-width="0.8"/>
<rect x="418.1" y="483.5" width="25" height="27" fill="#e00000"/>
<rect x="435.6" y="483.5" width="7.5" height="27" fill="#b80000"/>
<path d="M418.1,509.5 a12.5,3.5 0 0 0 25,0" fill="none" stroke="#ff5050" stroke-width="0.9"/>
<path d="M417.3,479.5 h26.6 v4.5 a13.3,3.5 0 0 1 -26.6,0 z" fill="#ff0000"/>
<path d="M417.3,484.0 a13.3,3.5 0 0 0 26.6,0" fill="none" stroke="#ff6060" stroke-width="0.7"/>
<path d="M417.6,481.0 a13,10.5 0 0 1 26,0 z" fill="#e00000"/>
<path d="M417.6,481.0 a13,3.5 0 0 0 26,0" fill="none" stroke="#ff0000" stroke-width="1"/>
<ellipse cx="441.1" cy="505.0" rx="3.8" ry="5" fill="#e00000" stroke="#ff0000" stroke-width="0.8"/>
<rect x="428.6" y="459.5" width="5" height="13" fill="#ff0000"/>
<rect x="429.40000000000003" y="431.5" width="2.6" height="30" fill="#ff0000"/>
<polygon points="419.90000000000003,456.0 427.6,453.0 437.6,456.5 437.6,460.0 429.6,463.0 419.90000000000003,459.5" fill="#ff0000"/>
<path d="M434.6,461.5 L439.1,465.0" stroke="#ff0000" stroke-width="3"/>
<path d="M423.6,451.5 Q430.6,446.5 436.6,451.5 L431.6,456.0 Z" fill="#ff0000"/>
<path d="M425.6,450.5 L430.6,455.5 M428.6,449.0 L430.6,455.5 M432.1,449.0 L430.6,455.5 M435.1,450.5 L430.6,455.5" stroke="#ff9090" stroke-width="0.6"/>
<path d="M439,505 L471,526" fill="none" stroke="#ecec30" stroke-width="14.2" stroke-linejoin="round"/><path d="M439,505 L471,526" fill="none" stroke="#969600" stroke-width="13" stroke-linejoin="round"/><path d="M439,505 L471,526" fill="none" stroke="#c4c400" stroke-width="10.6" stroke-linejoin="round" transform="translate(0,-0.4)"/><path d="M439,505 L471,526" fill="none" stroke="#dede00" stroke-width="6.5" stroke-linejoin="round" transform="translate(-0.3,-1.4)"/>
<path d="M445.5,501.6 Q443.5,508.0 438.5,512.4" stroke="#ffff30" stroke-width="0.8" fill="none"/>
<path d="M455.5,508.1 Q453.5,514.5 448.5,518.9" stroke="#ffff30" stroke-width="0.8" fill="none"/>
<path d="M466.5,515.1 Q464.5,521.5 459.5,525.9" stroke="#ffff30" stroke-width="0.8" fill="none"/>
</g>
<g>
<path d="M728,279 Q731,287 737,290 L785,317 Q797,324 787,331 L749,343.5 Q733,349 738,357 L760,365" fill="none" stroke="#ecec30" stroke-width="14.2" stroke-linejoin="round"/><path d="M728,279 Q731,287 737,290 L785,317 Q797,324 787,331 L749,343.5 Q733,349 738,357 L760,365" fill="none" stroke="#969600" stroke-width="13" stroke-linejoin="round"/><path d="M728,279 Q731,287 737,290 L785,317 Q797,324 787,331 L749,343.5 Q733,349 738,357 L760,365" fill="none" stroke="#c4c400" stroke-width="10.6" stroke-linejoin="round" transform="translate(0,-0.4)"/><path d="M728,279 Q731,287 737,290 L785,317 Q797,324 787,331 L749,343.5 Q733,349 738,357 L760,365" fill="none" stroke="#dede00" stroke-width="6.5" stroke-linejoin="round" transform="translate(-0.3,-1.4)"/>
<path d="M741.3,284.9 Q739.6,291.4 734.7,296.1" stroke="#ffff30" stroke-width="0.8" fill="none"/>
<path d="M783.3,308.4 Q781.6,314.9 776.7,319.6" stroke="#ffff30" stroke-width="0.8" fill="none"/>
<path d="M790.1,336.1 Q786.3,330.6 785.9,323.9" stroke="#ffff30" stroke-width="0.8" fill="none"/>
<path d="M753.1,349.1 Q749.3,343.6 748.9,336.9" stroke="#ffff30" stroke-width="0.8" fill="none"/>
<path d="M743.3,351.4 Q741.6,357.9 736.7,362.6" stroke="#ffff30" stroke-width="0.8" fill="none"/>
<ellipse cx="760.5" cy="365.5" rx="3.6" ry="5.5" fill="#e00000" stroke="#ff0000" stroke-width="0.8"/>
<path d="M762.0,387 h23 v7 a11.5,4.5 0 0 1 -23,0 z" fill="#e00000" stroke="#ff0000" stroke-width="0.9"/>
<path d="M760.5,381 h26 v6 a13,3.5 0 0 1 -26,0 z" fill="#ff0000"/>
<path d="M762.5,392 a11,3.5 0 0 0 22,0" fill="none" stroke="#ff5050" stroke-width="0.8"/>
<rect x="761.0" y="356" width="25" height="27" fill="#e00000"/>
<rect x="778.5" y="356" width="7.5" height="27" fill="#b80000"/>
<path d="M761.0,382 a12.5,3.5 0 0 0 25,0" fill="none" stroke="#ff5050" stroke-width="0.9"/>
<path d="M760.2,352 h26.6 v4.5 a13.3,3.5 0 0 1 -26.6,0 z" fill="#ff0000"/>
<path d="M760.2,356.5 a13.3,3.5 0 0 0 26.6,0" fill="none" stroke="#ff6060" stroke-width="0.7"/>
<path d="M760.5,353.5 a13,10.5 0 0 1 26,0 z" fill="#e00000"/>
<path d="M760.5,353.5 a13,3.5 0 0 0 26,0" fill="none" stroke="#ff0000" stroke-width="1"/>
<ellipse cx="784.0" cy="377.5" rx="3.8" ry="5" fill="#e00000" stroke="#ff0000" stroke-width="0.8"/>
<rect x="771.5" y="332" width="5" height="13" fill="#ff0000"/>
<rect x="772.3" y="304" width="2.6" height="30" fill="#ff0000"/>
<polygon points="762.8,328.5 770.5,325.5 780.5,329 780.5,332.5 772.5,335.5 762.8,332" fill="#ff0000"/>
<path d="M777.5,334 L782.0,337.5" stroke="#ff0000" stroke-width="3"/>
<path d="M766.5,324 Q773.5,319 779.5,324 L774.5,328.5 Z" fill="#ff0000"/>
<path d="M768.5,323 L773.5,328 M771.5,321.5 L773.5,328 M775.0,321.5 L773.5,328 M778.0,323 L773.5,328" stroke="#ff9090" stroke-width="0.6"/>
<path d="M781,376 L815,392" fill="none" stroke="#ecec30" stroke-width="14.2" stroke-linejoin="round"/><path d="M781,376 L815,392" fill="none" stroke="#969600" stroke-width="13" stroke-linejoin="round"/><path d="M781,376 L815,392" fill="none" stroke="#c4c400" stroke-width="10.6" stroke-linejoin="round" transform="translate(0,-0.4)"/><path d="M781,376 L815,392" fill="none" stroke="#dede00" stroke-width="6.5" stroke-linejoin="round" transform="translate(-0.3,-1.4)"/>
<path d="M786.9,371.7 Q785.6,378.3 781.1,383.3" stroke="#ffff30" stroke-width="0.8" fill="none"/>
<path d="M796.9,376.7 Q795.6,383.3 791.1,388.3" stroke="#ffff30" stroke-width="0.8" fill="none"/>
<path d="M807.9,381.7 Q806.6,388.3 802.1,393.3" stroke="#ffff30" stroke-width="0.8" fill="none"/>
</g>
<g transform="translate(0.0,0.0)">
<path d="M293,440 Q296,449 302,452 L359,487 Q370,494 362,501 L327,513 Q313,519 318,527 L330,532" fill="none" stroke="#ecec30" stroke-width="14.2" stroke-linejoin="round"/><path d="M293,440 Q296,449 302,452 L359,487 Q370,494 362,501 L327,513 Q313,519 318,527 L330,532" fill="none" stroke="#969600" stroke-width="13" stroke-linejoin="round"/><path d="M293,440 Q296,449 302,452 L359,487 Q370,494 362,501 L327,513 Q313,519 318,527 L330,532" fill="none" stroke="#c4c400" stroke-width="10.6" stroke-linejoin="round" transform="translate(0,-0.4)"/><path d="M293,440 Q296,449 302,452 L359,487 Q370,494 362,501 L327,513 Q313,519 318,527 L330,532" fill="none" stroke="#dede00" stroke-width="6.5" stroke-linejoin="round" transform="translate(-0.3,-1.4)"/>
<path d="M303.3,445.9 Q301.6,452.4 296.7,457.1" stroke="#ffff30" stroke-width="0.8" fill="none"/>
<path d="M358.3,478.4 Q356.6,484.9 351.7,489.6" stroke="#ffff30" stroke-width="0.8" fill="none"/>
<path d="M366.1,506.1 Q362.3,500.6 361.9,493.9" stroke="#ffff30" stroke-width="0.8" fill="none"/>
<path d="M327.1,520.1 Q323.3,514.6 322.9,507.9" stroke="#ffff30" stroke-width="0.8" fill="none"/>
<path d="M323.3,522.4 Q321.6,528.9 316.7,533.6" stroke="#ffff30" stroke-width="0.8" fill="none"/>
<ellipse cx="327.6" cy="528.5" rx="3.6" ry="5.5" fill="#e00000" stroke="#ff0000" stroke-width="0.8"/>
<path d="M329.1,550 h23 v7 a11.5,4.5 0 0 1 -23,0 z" fill="#e00000" stroke="#ff0000" stroke-width="0.9"/>
<path d="M327.6,544 h26 v6 a13,3.5 0 0 1 -26,0 z" fill="#ff0000"/>
<path d="M329.6,555 a11,3.5 0 0 0 22,0" fill="none" stroke="#ff5050" stroke-width="0.8"/>
<rect x="328.1" y="519" width="25" height="27" fill="#e00000"/>
<rect x="345.6" y="519" width="7.5" height="27" fill="#b80000"/>
<path d="M328.1,545 a12.5,3.5 0 0 0 25,0" fill="none" stroke="#ff5050" stroke-width="0.9"/>
<path d="M327.3,515 h26.6 v4.5 a13.3,3.5 0 0 1 -26.6,0 z" fill="#ff0000"/>
<path d="M327.3,519.5 a13.3,3.5 0 0 0 26.6,0" fill="none" stroke="#ff6060" stroke-width="0.7"/>
<path d="M327.6,516.5 a13,10.5 0 0 1 26,0 z" fill="#e00000"/>
<path d="M327.6,516.5 a13,3.5 0 0 0 26,0" fill="none" stroke="#ff0000" stroke-width="1"/>
<ellipse cx="351.1" cy="540.5" rx="3.8" ry="5" fill="#e00000" stroke="#ff0000" stroke-width="0.8"/>
<rect x="338.6" y="495" width="5" height="13" fill="#ff0000"/>
<rect x="339.40000000000003" y="467" width="2.6" height="30" fill="#ff0000"/>
<polygon points="329.90000000000003,491.5 337.6,488.5 347.6,492 347.6,495.5 339.6,498.5 329.90000000000003,495" fill="#ff0000"/>
<path d="M344.6,497 L349.1,500.5" stroke="#ff0000" stroke-width="3"/>
<path d="M333.6,487 Q340.6,482 346.6,487 L341.6,491.5 Z" fill="#ff0000"/>
<path d="M335.6,486 L340.6,491 M338.6,484.5 L340.6,491 M342.1,484.5 L340.6,491 M345.1,486 L340.6,491" stroke="#ff9090" stroke-width="0.6"/>
<path d="M349,540 L383,557" fill="none" stroke="#ecec30" stroke-width="14.2" stroke-linejoin="round"/><path d="M349,540 L383,557" fill="none" stroke="#969600" stroke-width="13" stroke-linejoin="round"/><path d="M349,540 L383,557" fill="none" stroke="#c4c400" stroke-width="10.6" stroke-linejoin="round" transform="translate(0,-0.4)"/><path d="M349,540 L383,557" fill="none" stroke="#dede00" stroke-width="6.5" stroke-linejoin="round" transform="translate(-0.3,-1.4)"/>
<path d="M354.9,535.7 Q353.6,542.3 349.1,547.3" stroke="#ffff30" stroke-width="0.8" fill="none"/>
<path d="M364.9,540.7 Q363.6,547.3 359.1,552.3" stroke="#ffff30" stroke-width="0.8" fill="none"/>
<path d="M375.9,546.2 Q374.6,552.8 370.1,557.8" stroke="#ffff30" stroke-width="0.8" fill="none"/>
</g>
<polygon points="43.6,371.0 43.6,375.0 210.0,473.0 931.7,200.5 931.7,196.5 210.0,469.0" fill="#7a7a7a" stroke="#5a5a5a" stroke-width="0.8"/>
<polygon points="43.6,371.0 760.0,98.0 931.7,196.5 210.0,469.0" fill="#696969" stroke="#7e7e7e" stroke-width="1"/>
<polyline points="47.6,371.0 760.0,101.0 926.7,196.5" fill="none" stroke="#5e5e5e" stroke-width="1"/>
<g transform="translate(0.0,-0.0)">
<polygon points="246.5,327 267.3,317.9 297.1,332.8 301,351 288.7,355.5 246.5,330.2" fill="#0000f0"/>
<polygon points="246.5,330.2 288.7,355.5 301,351 301,354 288.7,358.5 246.5,333" fill="#0000a8"/>
<polygon points="295.8,328.9 312.7,327.6 333.4,343.2 333.4,349.7 317.9,362.7 299.7,360.1 297.1,352.3" fill="#0000c8"/>
<path d="M266.6,322.4 V308 Q266.6,303.5 271,302 L280,298.5 Q284,297 287.5,299.5 L303,310 Q307.5,313 307.5,317 V332.8 L301,338 L291.9,341.9 Z" fill="#0000f0"/>
<path d="M266.6,308 Q266.6,303.5 271,302 L280,298.5 Q284,297 287.5,299.5 L303,310 Q307.5,313 303,316 L290,320 Z" fill="#2020ff"/>
<polygon points="290,320 307.5,313.4 307.5,332.8 291.9,341.9" fill="#0000c8"/>
<polygon points="290.6,362.7 317.9,352.3 369.8,379.5 369.8,383.4 341.2,396.4 290.6,366.6" fill="#0000f0"/>
<polygon points="290.6,362.7 341.2,392.5 369.8,379.5 369.8,383.4 341.2,396.4 290.6,366.6" fill="#0000a8"/>
<polygon points="319.2,351 330.8,344.5 343.8,342.6 351.6,348.4 351.6,375.6 338.6,380.8 319.2,369.2" fill="#0000f0"/>
<polygon points="338.6,352 351.6,348.4 351.6,375.6 338.6,380.8" fill="#0000c8"/>
<polygon points="350.3,352.3 363.3,350.3 365.2,362.7 352.9,366.6" fill="#0000c8"/>
<path d="M362,357 L375,353.5 Q387.5,350.5 387,365" fill="none" stroke="#ecec30" stroke-width="14.2" stroke-linejoin="round"/><path d="M362,357 L375,353.5 Q387.5,350.5 387,365" fill="none" stroke="#969600" stroke-width="13" stroke-linejoin="round"/><path d="M362,357 L375,353.5 Q387.5,350.5 387,365" fill="none" stroke="#c4c400" stroke-width="10.6" stroke-linejoin="round" transform="translate(0,-0.4)"/><path d="M362,357 L375,353.5 Q387.5,350.5 387,365" fill="none" stroke="#dede00" stroke-width="6.5" stroke-linejoin="round" transform="translate(-0.3,-1.4)"/>
<ellipse cx="387" cy="364.5" rx="6.2" ry="2.6" fill="#c8c800" stroke="#f8f820" stroke-width="0.9"/>
<path d="M375,347.5 Q378,353 376.5,359.5 M383,350 Q382,356 385.5,362" stroke="#ffff40" stroke-width="0.8" fill="none"/>
<path d="M325,371 L306,378.5 Q290.5,384.5 291,401.5" fill="none" stroke="#ecec30" stroke-width="14.2" stroke-linejoin="round"/><path d="M325,371 L306,378.5 Q290.5,384.5 291,401.5" fill="none" stroke="#969600" stroke-width="13" stroke-linejoin="round"/><path d="M325,371 L306,378.5 Q290.5,384.5 291,401.5" fill="none" stroke="#c4c400" stroke-width="10.6" stroke-linejoin="round" transform="translate(0,-0.4)"/><path d="M325,371 L306,378.5 Q290.5,384.5 291,401.5" fill="none" stroke="#dede00" stroke-width="6.5" stroke-linejoin="round" transform="translate(-0.3,-1.4)"/>
<ellipse cx="291" cy="401" rx="6.2" ry="2.6" fill="#c8c800" stroke="#f8f820" stroke-width="0.9"/>
<path d="M322.5,365.5 Q325.5,371 324,377 M309,372 Q312,378 309.5,384.5" stroke="#ffff40" stroke-width="0.8" fill="none"/>
<rect x="278" y="298.5" width="6" height="1.8" rx="1" fill="#30f030"/>
<rect x="301" y="328" width="10" height="2.5" rx="1" fill="#30f030"/>
<rect x="310" y="335" width="9" height="2" rx="1" fill="#30f030"/>
<rect x="326" y="344" width="9" height="1.8" rx="1" fill="#30f030"/>
<rect x="347" y="357" width="10" height="2.4" rx="1" fill="#30f030"/>
<rect x="352" y="374" width="12" height="2" rx="1" fill="#30f030"/>
<rect x="284" y="339" width="6" height="2" rx="1" fill="#30f030"/>
<rect x="270" y="331" width="3" height="2" rx="1" fill="#30f030"/>
<rect x="319" y="351" width="2" height="2" rx="1" fill="#30f030"/>
<rect x="357" y="379" width="4" height="1.6" rx="1" fill="#30f030"/>
</g>
<g transform="translate(113.9,-43.2)">
<polygon points="246.5,327 267.3,317.9 297.1,332.8 301,351 288.7,355.5 246.5,330.2" fill="#0000f0"/>
<polygon points="246.5,330.2 288.7,355.5 301,351 301,354 288.7,358.5 246.5,333" fill="#0000a8"/>
<polygon points="295.8,328.9 312.7,327.6 333.4,343.2 333.4,349.7 317.9,362.7 299.7,360.1 297.1,352.3" fill="#0000c8"/>
<path d="M266.6,322.4 V308 Q266.6,303.5 271,302 L280,298.5 Q284,297 287.5,299.5 L303,310 Q307.5,313 307.5,317 V332.8 L301,338 L291.9,341.9 Z" fill="#0000f0"/>
<path d="M266.6,308 Q266.6,303.5 271,302 L280,298.5 Q284,297 287.5,299.5 L303,310 Q307.5,313 303,316 L290,320 Z" fill="#2020ff"/>
<polygon points="290,320 307.5,313.4 307.5,332.8 291.9,341.9" fill="#0000c8"/>
<polygon points="290.6,362.7 317.9,352.3 369.8,379.5 369.8,383.4 341.2,396.4 290.6,366.6" fill="#0000f0"/>
<polygon points="290.6,362.7 341.2,392.5 369.8,379.5 369.8,383.4 341.2,396.4 290.6,366.6" fill="#0000a8"/>
<polygon points="319.2,351 330.8,344.5 343.8,342.6 351.6,348.4 351.6,375.6 338.6,380.8 319.2,369.2" fill="#0000f0"/>
<polygon points="338.6,352 351.6,348.4 351.6,375.6 338.6,380.8" fill="#0000c8"/>
<polygon points="350.3,352.3 363.3,350.3 365.2,362.7 352.9,366.6" fill="#0000c8"/>
<path d="M362,357 L375,353.5 Q387.5,350.5 387,365" fill="none" stroke="#ecec30" stroke-width="14.2" stroke-linejoin="round"/><path d="M362,357 L375,353.5 Q387.5,350.5 387,365" fill="none" stroke="#969600" stroke-width="13" stroke-linejoin="round"/><path d="M362,357 L375,353.5 Q387.5,350.5 387,365" fill="none" stroke="#c4c400" stroke-width="10.6" stroke-linejoin="round" transform="translate(0,-0.4)"/><path d="M362,357 L375,353.5 Q387.5,350.5 387,365" fill="none" stroke="#dede00" stroke-width="6.5" stroke-linejoin="round" transform="translate(-0.3,-1.4)"/>
<ellipse cx="387" cy="364.5" rx="6.2" ry="2.6" fill="#c8c800" stroke="#f8f820" stroke-width="0.9"/>
<path d="M375,347.5 Q378,353 376.5,359.5 M383,350 Q382,356 385.5,362" stroke="#ffff40" stroke-width="0.8" fill="none"/>
<path d="M325,371 L306,378.5 Q290.5,384.5 291,401.5" fill="none" stroke="#ecec30" stroke-width="14.2" stroke-linejoin="round"/><path d="M325,371 L306,378.5 Q290.5,384.5 291,401.5" fill="none" stroke="#969600" stroke-width="13" stroke-linejoin="round"/><path d="M325,371 L306,378.5 Q290.5,384.5 291,401.5" fill="none" stroke="#c4c400" stroke-width="10.6" stroke-linejoin="round" transform="translate(0,-0.4)"/><path d="M325,371 L306,378.5 Q290.5,384.5 291,401.5" fill="none" stroke="#dede00" stroke-width="6.5" stroke-linejoin="round" transform="translate(-0.3,-1.4)"/>
<ellipse cx="291" cy="401" rx="6.2" ry="2.6" fill="#c8c800" stroke="#f8f820" stroke-width="0.9"/>
<path d="M322.5,365.5 Q325.5,371 324,377 M309,372 Q312,378 309.5,384.5" stroke="#ffff40" stroke-width="0.8" fill="none"/>
<rect x="278" y="298.5" width="6" height="1.8" rx="1" fill="#30f030"/>
<rect x="301" y="328" width="10" height="2.5" rx="1" fill="#30f030"/>
<rect x="310" y="335" width="9" height="2" rx="1" fill="#30f030"/>
<rect x="326" y="344" width="9" height="1.8" rx="1" fill="#30f030"/>
<rect x="347" y="357" width="10" height="2.4" rx="1" fill="#30f030"/>
<rect x="352" y="374" width="12" height="2" rx="1" fill="#30f030"/>
<rect x="284" y="339" width="6" height="2" rx="1" fill="#30f030"/>
<rect x="270" y="331" width="3" height="2" rx="1" fill="#30f030"/>
<rect x="319" y="351" width="2" height="2" rx="1" fill="#30f030"/>
<rect x="357" y="379" width="4" height="1.6" rx="1" fill="#30f030"/>
</g>
<g transform="translate(227.8,-86.4)">
<polygon points="246.5,327 267.3,317.9 297.1,332.8 301,351 288.7,355.5 246.5,330.2" fill="#0000f0"/>
<polygon points="246.5,330.2 288.7,355.5 301,351 301,354 288.7,358.5 246.5,333" fill="#0000a8"/>
<polygon points="295.8,328.9 312.7,327.6 333.4,343.2 333.4,349.7 317.9,362.7 299.7,360.1 297.1,352.3" fill="#0000c8"/>
<path d="M266.6,322.4 V308 Q266.6,303.5 271,302 L280,298.5 Q284,297 287.5,299.5 L303,310 Q307.5,313 307.5,317 V332.8 L301,338 L291.9,341.9 Z" fill="#0000f0"/>
<path d="M266.6,308 Q266.6,303.5 271,302 L280,298.5 Q284,297 287.5,299.5 L303,310 Q307.5,313 303,316 L290,320 Z" fill="#2020ff"/>
<polygon points="290,320 307.5,313.4 307.5,332.8 291.9,341.9" fill="#0000c8"/>
<polygon points="290.6,362.7 317.9,352.3 369.8,379.5 369.8,383.4 341.2,396.4 290.6,366.6" fill="#0000f0"/>
<polygon points="290.6,362.7 341.2,392.5 369.8,379.5 369.8,383.4 341.2,396.4 290.6,366.6" fill="#0000a8"/>
<polygon points="319.2,351 330.8,344.5 343.8,342.6 351.6,348.4 351.6,375.6 338.6,380.8 319.2,369.2" fill="#0000f0"/>
<polygon points="338.6,352 351.6,348.4 351.6,375.6 338.6,380.8" fill="#0000c8"/>
<polygon points="350.3,352.3 363.3,350.3 365.2,362.7 352.9,366.6" fill="#0000c8"/>
<path d="M362,357 L375,353.5 Q387.5,350.5 387,365" fill="none" stroke="#ecec30" stroke-width="14.2" stroke-linejoin="round"/><path d="M362,357 L375,353.5 Q387.5,350.5 387,365" fill="none" stroke="#969600" stroke-width="13" stroke-linejoin="round"/><path d="M362,357 L375,353.5 Q387.5,350.5 387,365" fill="none" stroke="#c4c400" stroke-width="10.6" stroke-linejoin="round" transform="translate(0,-0.4)"/><path d="M362,357 L375,353.5 Q387.5,350.5 387,365" fill="none" stroke="#dede00" stroke-width="6.5" stroke-linejoin="round" transform="translate(-0.3,-1.4)"/>
<ellipse cx="387" cy="364.5" rx="6.2" ry="2.6" fill="#c8c800" stroke="#f8f820" stroke-width="0.9"/>
<path d="M375,347.5 Q378,353 376.5,359.5 M383,350 Q382,356 385.5,362" stroke="#ffff40" stroke-width="0.8" fill="none"/>
<path d="M325,371 L306,378.5 Q290.5,384.5 291,401.5" fill="none" stroke="#ecec30" stroke-width="14.2" stroke-linejoin="round"/><path d="M325,371 L306,378.5 Q290.5,384.5 291,401.5" fill="none" stroke="#969600" stroke-width="13" stroke-linejoin="round"/><path d="M325,371 L306,378.5 Q290.5,384.5 291,401.5" fill="none" stroke="#c4c400" stroke-width="10.6" stroke-linejoin="round" transform="translate(0,-0.4)"/><path d="M325,371 L306,378.5 Q290.5,384.5 291,401.5" fill="none" stroke="#dede00" stroke-width="6.5" stroke-linejoin="round" transform="translate(-0.3,-1.4)"/>
<ellipse cx="291" cy="401" rx="6.2" ry="2.6" fill="#c8c800" stroke="#f8f820" stroke-width="0.9"/>
<path d="M322.5,365.5 Q325.5,371 324,377 M309,372 Q312,378 309.5,384.5" stroke="#ffff40" stroke-width="0.8" fill="none"/>
<rect x="278" y="298.5" width="6" height="1.8" rx="1" fill="#30f030"/>
<rect x="301" y="328" width="10" height="2.5" rx="1" fill="#30f030"/>
<rect x="310" y="335" width="9" height="2" rx="1" fill="#30f030"/>
<rect x="326" y="344" width="9" height="1.8" rx="1" fill="#30f030"/>
<rect x="347" y="357" width="10" height="2.4" rx="1" fill="#30f030"/>
<rect x="352" y="374" width="12" height="2" rx="1" fill="#30f030"/>
<rect x="284" y="339" width="6" height="2" rx="1" fill="#30f030"/>
<rect x="270" y="331" width="3" height="2" rx="1" fill="#30f030"/>
<rect x="319" y="351" width="2" height="2" rx="1" fill="#30f030"/>
<rect x="357" y="379" width="4" height="1.6" rx="1" fill="#30f030"/>
</g>
<g transform="translate(341.7,-129.6)">
<polygon points="246.5,327 267.3,317.9 297.1,332.8 301,351 288.7,355.5 246.5,330.2" fill="#0000f0"/>
<polygon points="246.5,330.2 288.7,355.5 301,351 301,354 288.7,358.5 246.5,333" fill="#0000a8"/>
<polygon points="295.8,328.9 312.7,327.6 333.4,343.2 333.4,349.7 317.9,362.7 299.7,360.1 297.1,352.3" fill="#0000c8"/>
<path d="M266.6,322.4 V308 Q266.6,303.5 271,302 L280,298.5 Q284,297 287.5,299.5 L303,310 Q307.5,313 307.5,317 V332.8 L301,338 L291.9,341.9 Z" fill="#0000f0"/>
<path d="M266.6,308 Q266.6,303.5 271,302 L280,298.5 Q284,297 287.5,299.5 L303,310 Q307.5,313 303,316 L290,320 Z" fill="#2020ff"/>
<polygon points="290,320 307.5,313.4 307.5,332.8 291.9,341.9" fill="#0000c8"/>
<polygon points="290.6,362.7 317.9,352.3 369.8,379.5 369.8,383.4 341.2,396.4 290.6,366.6" fill="#0000f0"/>
<polygon points="290.6,362.7 341.2,392.5 369.8,379.5 369.8,383.4 341.2,396.4 290.6,366.6" fill="#0000a8"/>
<polygon points="319.2,351 330.8,344.5 343.8,342.6 351.6,348.4 351.6,375.6 338.6,380.8 319.2,369.2" fill="#0000f0"/>
<polygon points="338.6,352 351.6,348.4 351.6,375.6 338.6,380.8" fill="#0000c8"/>
<polygon points="350.3,352.3 363.3,350.3 365.2,362.7 352.9,366.6" fill="#0000c8"/>
<path d="M362,357 L375,353.5 Q387.5,350.5 387,365" fill="none" stroke="#ecec30" stroke-width="14.2" stroke-linejoin="round"/><path d="M362,357 L375,353.5 Q387.5,350.5 387,365" fill="none" stroke="#969600" stroke-width="13" stroke-linejoin="round"/><path d="M362,357 L375,353.5 Q387.5,350.5 387,365" fill="none" stroke="#c4c400" stroke-width="10.6" stroke-linejoin="round" transform="translate(0,-0.4)"/><path d="M362,357 L375,353.5 Q387.5,350.5 387,365" fill="none" stroke="#dede00" stroke-width="6.5" stroke-linejoin="round" transform="translate(-0.3,-1.4)"/>
<ellipse cx="387" cy="364.5" rx="6.2" ry="2.6" fill="#c8c800" stroke="#f8f820" stroke-width="0.9"/>
<path d="M375,347.5 Q378,353 376.5,359.5 M383,350 Q382,356 385.5,362" stroke="#ffff40" stroke-width="0.8" fill="none"/>
<path d="M325,371 L306,378.5 Q290.5,384.5 291,401.5" fill="none" stroke="#ecec30" stroke-width="14.2" stroke-linejoin="round"/><path d="M325,371 L306,378.5 Q290.5,384.5 291,401.5" fill="none" stroke="#969600" stroke-width="13" stroke-linejoin="round"/><path d="M325,371 L306,378.5 Q290.5,384.5 291,401.5" fill="none" stroke="#c4c400" stroke-width="10.6" stroke-linejoin="round" transform="translate(0,-0.4)"/><path d="M325,371 L306,378.5 Q290.5,384.5 291,401.5" fill="none" stroke="#dede00" stroke-width="6.5" stroke-linejoin="round" transform="translate(-0.3,-1.4)"/>
<ellipse cx="291" cy="401" rx="6.2" ry="2.6" fill="#c8c800" stroke="#f8f820" stroke-width="0.9"/>
<path d="M322.5,365.5 Q325.5,371 324,377 M309,372 Q312,378 309.5,384.5" stroke="#ffff40" stroke-width="0.8" fill="none"/>
<rect x="278" y="298.5" width="6" height="1.8" rx="1" fill="#30f030"/>
<rect x="301" y="328" width="10" height="2.5" rx="1" fill="#30f030"/>
<rect x="310" y="335" width="9" height="2" rx="1" fill="#30f030"/>
<rect x="326" y="344" width="9" height="1.8" rx="1" fill="#30f030"/>
<rect x="347" y="357" width="10" height="2.4" rx="1" fill="#30f030"/>
<rect x="352" y="374" width="12" height="2" rx="1" fill="#30f030"/>
<rect x="284" y="339" width="6" height="2" rx="1" fill="#30f030"/>
<rect x="270" y="331" width="3" height="2" rx="1" fill="#30f030"/>
<rect x="319" y="351" width="2" height="2" rx="1" fill="#30f030"/>
<rect x="357" y="379" width="4" height="1.6" rx="1" fill="#30f030"/>
</g>
<polygon points="433.5,443.5 436,442.5 440.5,447 438,448.5" fill="#109040"/>
<polygon points="448.5,436.0 451,435.0 455.5,439.5 453,441.0" fill="#109040"/>
<polygon points="548.0,400.9 550.5,399.9 555.0,404.4 552.5,405.9" fill="#109040"/>
<polygon points="563.0,393.4 565.5,392.4 570.0,396.9 567.5,398.4" fill="#109040"/>
<polygon points="662.5,358.3 665,357.3 669.5,361.8 667,363.3" fill="#109040"/>
<polygon points="677.5,350.8 680,349.8 684.5,354.3 682,355.8" fill="#109040"/>
<polygon points="775.0,314.0 777.5,313.0 782.0,317.5 779.5,319.0" fill="#109040"/>
<polygon points="336.0,479.5 338.5,478.5 343.0,483 340.5,484.5" fill="#109040"/>
<defs><linearGradient id="hg" x1="0" y1="0" x2="0" y2="1"><stop offset="0" stop-color="#f0f030"/><stop offset="0.07" stop-color="#b8b800"/><stop offset="0.2" stop-color="#dcdc00"/><stop offset="0.5" stop-color="#cdcd00"/><stop offset="0.8" stop-color="#adad00"/><stop offset="0.93" stop-color="#8a8a00"/><stop offset="1" stop-color="#e6e640"/></linearGradient></defs>
<g transform="translate(148,645.7) rotate(-20.762)"><rect x="0" y="-7.8" width="1028.8" height="15.6" rx="1" fill="url(#hg)"/><path d="M1025.8,-7.8 Q1032.8,0 1025.8,7.8" fill="#b0b000" stroke="#e8e830" stroke-width=".8"/></g>
<ellipse cx="148" cy="645.7" rx="4.8" ry="7.5" fill="#c0c000" stroke="#f8f800" stroke-width="1"/>
<path d="M133,652 L147,646 M137,649 L145,643 L140,651" stroke="#40e0f0" stroke-width="1.2" fill="none"/>
<path d="M1113,277 L1124,274 L1121,281 Z" stroke="#40e0f0" stroke-width="1.2" fill="none"/>
<polygon points="419.2,549.2 426.2,547.2 431.2,550.2 424.2,552.2" fill="#109040"/>
<polygon points="532,505.2 539,503.2 544,506.2 537,508.2" fill="#109040"/>
<polygon points="644.9,462.4 651.9,460.4 656.9,463.4 649.9,465.4" fill="#109040"/>
<path d="M381.5,548.7560000000001 Q385.5,556.2560000000001 386.5,563.7560000000001" stroke="#ffff30" stroke-width="0.9" fill="none"/>
<path d="M391.5,544.966 Q395.5,552.466 396.5,559.966" stroke="#ffff30" stroke-width="0.9" fill="none"/>
<path d="M467.5,516.162 Q471.5,523.662 472.5,531.162" stroke="#ffff30" stroke-width="0.9" fill="none"/>
<path d="M494.5,505.9290000000001 Q498.5,513.4290000000001 499.5,520.9290000000001" stroke="#ffff30" stroke-width="0.9" fill="none"/>
<path d="M594.5,468.02900000000005 Q598.5,475.52900000000005 599.5,483.02900000000005" stroke="#ffff30" stroke-width="0.9" fill="none"/>
<path d="M607.5,463.10200000000003 Q611.5,470.60200000000003 612.5,478.10200000000003" stroke="#ffff30" stroke-width="0.9" fill="none"/>
<path d="M721.5,419.8960000000001 Q725.5,427.3960000000001 726.5,434.8960000000001" stroke="#ffff30" stroke-width="0.9" fill="none"/>
<path d="M966.5,905 V925 M960,910 L929,925.5 M970,908 L991,925.5" stroke="#000" stroke-width="1.1" fill="none"/>
</g></svg>
<div id="dialog">
<div class="a" style="left:734px;top:403px;width:981px;height:512px;background:#5a5a5a"></div>
<div class="a" style="left:734px;top:403px;width:978px;height:509px;background:#8c8c8c"></div>
<div class="a" style="left:735px;top:404px;width:976px;height:507px;background:#fff"></div>
<div class="a" style="left:736px;top:405px;width:975px;height:506px;background:#8a8a8a"></div>
<div class="a" style="left:738px;top:407px;width:973px;height:23px;background:#a0a0a0;color:#fafafa;font-size:10.9px;font-weight:bold;line-height:25px;padding-left:3px">Спецификация</div>
<svg class="a" style="left:1698px;top:414px" width="10" height="9" viewBox="0 0 10 9"><path d="M1 0.5 L9 8.5 M9 0.5 L1 8.5" stroke="#fff" stroke-width="1.5"/></svg>
<div class="a" style="left:738px;top:430px;width:973px;height:481px;background:#f0f0f0"></div>
<div class="a" style="left:936px;top:431px;width:773px;height:20px;background:#e1e1e1;border-left:1px solid #adadad;border-bottom:1px solid #adadad;color:#000;font-size:11.05px;line-height:19px;padding-left:4px;white-space:nowrap">Назначение типов объектов</div>
<svg class="a" style="left:1694px;top:437px" width="12" height="8" viewBox="0 0 12 8"><path d="M1.5 1.5 L6 6 L10.5 1.5" stroke="#444" stroke-width="1.3" fill="none"/></svg>
<div class="a" style="left:809px;top:432px;width:1px;height:18px;background:#a0a0a0"></div>
<div class="a" style="left:863px;top:432px;width:1px;height:18px;background:#a0a0a0"></div>
<div class="a" style="left:738px;top:458px;width:957px;height:437px;background:#fff"></div>
<div class="a t11" style="left:744px;top:462px">По...</div>
<div class="a t11" style="left:779px;top:462px">Наименование</div>
<div class="a t11" style="left:1224px;top:462px">Материал</div>
<div class="a t11" style="left:1285px;top:462px">Вес</div>
<div class="a t11" style="left:1331px;top:462px">Примечание</div>
<div class="a" style="left:772px;top:458px;width:1px;height:24px;background:#e6e6e6"></div>
<div class="a" style="left:1218px;top:458px;width:1px;height:24px;background:#e6e6e6"></div>
<div class="a" style="left:1280px;top:458px;width:1px;height:24px;background:#e6e6e6"></div>
<div class="a" style="left:1325px;top:458px;width:1px;height:24px;background:#e6e6e6"></div>
<div class="a" style="left:742px;top:482px;width:31px;height:18px;background:#e1e1e1"></div>
<div class="a" style="left:774px;top:482px;width:314px;height:18px;background:#e1e1e1"></div>
<div class="a" style="left:1089px;top:482px;width:130px;height:18px;background:#e1e1e1"></div>
<div class="a" style="left:1220px;top:482px;width:60px;height:18px;background:#e1e1e1"></div>
<div class="a" style="left:1281px;top:482px;width:44px;height:18px;background:#e1e1e1"></div>
<div class="a" style="left:1326px;top:482px;width:368px;height:18px;background:#e1e1e1"></div>
<div class="a tb" style="left:782px;top:485px;color:#000">Арматура</div>
<div class="a" style="left:742px;top:501px;width:31px;height:18px;background:#e1e1e1"></div>
<div class="a" style="left:774px;top:501px;width:314px;height:18px;background:#ffffff"></div>
<div class="a" style="left:1089px;top:501px;width:130px;height:18px;background:#ffffff"></div>
<div class="a" style="left:1220px;top:501px;width:60px;height:18px;background:#ffffff"></div>
<div class="a" style="left:1281px;top:501px;width:44px;height:18px;background:#ffffff"></div>
<div class="a" style="left:1326px;top:501px;width:368px;height:18px;background:#e1e1e1"></div>
<div class="a t11" style="left:782px;top:503px;color:#000">Задвижка шиберная DN 800, PN 8,0 МПа. ЗШ-800-8,0-Р5...</div>
<div class="a t11" style="left:1227px;top:503px;color:#000">09Г2С</div>
<div class="a t11" style="left:1289px;top:503px;color:#000">132...</div>
<div class="a" style="left:742px;top:520px;width:31px;height:18px;background:#e1e1e1"></div>
<div class="a" style="left:774px;top:520px;width:314px;height:18px;background:#e1e1e1"></div>
<div class="a" style="left:1089px;top:520px;width:130px;height:18px;background:#e1e1e1"></div>
<div class="a" style="left:1220px;top:520px;width:60px;height:18px;background:#e1e1e1"></div>
<div class="a" style="left:1281px;top:520px;width:44px;height:18px;background:#e1e1e1"></div>
<div class="a" style="left:1326px;top:520px;width:368px;height:18px;background:#e1e1e1"></div>
<div class="a tb" style="left:782px;top:523px;color:#000">Детали трубопроводные</div>
<div class="a" style="left:742px;top:539px;width:31px;height:18px;background:#e1e1e1"></div>
<div class="a" style="left:774px;top:539px;width:314px;height:18px;background:#e1e1e1"></div>
<div class="a" style="left:1089px;top:539px;width:130px;height:18px;background:#e1e1e1"></div>
<div class="a" style="left:1220px;top:539px;width:60px;height:18px;background:#e1e1e1"></div>
<div class="a" style="left:1281px;top:539px;width:44px;height:18px;background:#e1e1e1"></div>
<div class="a" style="left:1326px;top:539px;width:368px;height:18px;background:#e1e1e1"></div>
<div class="a tb" style="left:782px;top:542px;color:#000">Отвод</div>
<div class="a" style="left:742px;top:558px;width:31px;height:18px;background:#e1e1e1"></div>
<div class="a" style="left:774px;top:558px;width:314px;height:18px;background:#e1e1e1"></div>
<div class="a" style="left:1089px;top:558px;width:130px;height:18px;background:#e1e1e1"></div>
<div class="a" style="left:1220px;top:558px;width:60px;height:18px;background:#e1e1e1"></div>
<div class="a" style="left:1281px;top:558px;width:44px;height:18px;background:#e1e1e1"></div>
<div class="a" style="left:1326px;top:558px;width:368px;height:18px;background:#e1e1e1"></div>
<div class="a tb" style="left:782px;top:561px;color:#000">Отвод</div>
<div class="a" style="left:742px;top:577px;width:31px;height:18px;background:#e1e1e1"></div>
<div class="a" style="left:774px;top:577px;width:314px;height:18px;background:#ffffff"></div>
<div class="a" style="left:1089px;top:577px;width:130px;height:18px;background:#ffffff"></div>
<div class="a" style="left:1220px;top:577px;width:60px;height:18px;background:#ffffff"></div>
<div class="a" style="left:1281px;top:577px;width:44px;height:18px;background:#ffffff"></div>
<div class="a" style="left:1326px;top:577px;width:368px;height:18px;background:#e1e1e1"></div>
<div class="a t11" style="left:782px;top:579px;color:#000">Отвод ОКШ 90 820(12К56)-7,5-0,75-1,5DN-ХЛ, Рисп = 10,...</div>
<div class="a t11" style="left:1227px;top:579px;color:#000">09Г2С</div>
<div class="a t11" style="left:1289px;top:579px;color:#000">488</div>
<div class="a" style="left:742px;top:596px;width:31px;height:18px;background:#e1e1e1"></div>
<div class="a" style="left:774px;top:596px;width:314px;height:18px;background:#e1e1e1"></div>
<div class="a" style="left:1089px;top:596px;width:130px;height:18px;background:#e1e1e1"></div>
<div class="a" style="left:1220px;top:596px;width:60px;height:18px;background:#e1e1e1"></div>
<div class="a" style="left:1281px;top:596px;width:44px;height:18px;background:#e1e1e1"></div>
<div class="a" style="left:1326px;top:596px;width:368px;height:18px;background:#e1e1e1"></div>
<div class="a tb" style="left:782px;top:599px;color:#000">Переход</div>
<div class="a" style="left:742px;top:615px;width:31px;height:18px;background:#e1e1e1"></div>
<div class="a" style="left:774px;top:615px;width:314px;height:18px;background:#e1e1e1"></div>
<div class="a" style="left:1089px;top:615px;width:130px;height:18px;background:#e1e1e1"></div>
<div class="a" style="left:1220px;top:615px;width:60px;height:18px;background:#e1e1e1"></div>
<div class="a" style="left:1281px;top:615px;width:44px;height:18px;background:#e1e1e1"></div>
<div class="a" style="left:1326px;top:615px;width:368px;height:18px;background:#e1e1e1"></div>
<div class="a tb" style="left:782px;top:618px;color:#000">Переход</div>
<div class="a" style="left:742px;top:634px;width:31px;height:18px;background:#e1e1e1"></div>
<div class="a" style="left:774px;top:634px;width:314px;height:18px;background:#ffffff"></div>
<div class="a" style="left:1089px;top:634px;width:130px;height:18px;background:#ffffff"></div>
<div class="a" style="left:1220px;top:634px;width:60px;height:18px;background:#ffffff"></div>
<div class="a" style="left:1281px;top:634px;width:44px;height:18px;background:#ffffff"></div>
<div class="a" style="left:1326px;top:634px;width:368px;height:18px;background:#e1e1e1"></div>
<div class="a t11" style="left:782px;top:636px;color:#000">Переход ПШ 1020x820-7,5-0,75-ХЛ</div>
<div class="a t11" style="left:1227px;top:636px;color:#000">09Г2С</div>
<div class="a t11" style="left:1289px;top:636px;color:#000">307</div>
<div class="a" style="left:742px;top:653px;width:31px;height:18px;background:#e1e1e1"></div>
<div class="a" style="left:774px;top:653px;width:314px;height:18px;background:#e1e1e1"></div>
<div class="a" style="left:1089px;top:653px;width:130px;height:18px;background:#e1e1e1"></div>
<div class="a" style="left:1220px;top:653px;width:60px;height:18px;background:#e1e1e1"></div>
<div class="a" style="left:1281px;top:653px;width:44px;height:18px;background:#e1e1e1"></div>
<div class="a" style="left:1326px;top:653px;width:368px;height:18px;background:#e1e1e1"></div>
<div class="a tb" style="left:782px;top:656px;color:#000">Тройник равнопроходный</div>
<div class="a" style="left:742px;top:672px;width:31px;height:18px;background:#e1e1e1"></div>
<div class="a" style="left:774px;top:672px;width:314px;height:18px;background:#e1e1e1"></div>
<div class="a" style="left:1089px;top:672px;width:130px;height:18px;background:#e1e1e1"></div>
<div class="a" style="left:1220px;top:672px;width:60px;height:18px;background:#e1e1e1"></div>
<div class="a" style="left:1281px;top:672px;width:44px;height:18px;background:#e1e1e1"></div>
<div class="a" style="left:1326px;top:672px;width:368px;height:18px;background:#e1e1e1"></div>
<div class="a tb" style="left:782px;top:675px;color:#000">Тройник</div>
<div class="a" style="left:742px;top:691px;width:31px;height:18px;background:#e1e1e1"></div>
<div class="a" style="left:774px;top:691px;width:314px;height:18px;background:#ffffff"></div>
<div class="a" style="left:1089px;top:691px;width:130px;height:18px;background:#ffffff"></div>
<div class="a" style="left:1220px;top:691px;width:60px;height:18px;background:#ffffff"></div>
<div class="a" style="left:1281px;top:691px;width:44px;height:18px;background:#ffffff"></div>
<div class="a" style="left:1326px;top:691px;width:368px;height:18px;background:#e1e1e1"></div>
<div class="a t11" style="left:782px;top:693px;color:#000">Тройник ТШС 1020-4,0-0,75-ХЛ</div>
<div class="a t11" style="left:1227px;top:693px;color:#000">09Г2С</div>
<div class="a t11" style="left:1289px;top:693px;color:#000">1900</div>
<div class="a" style="left:742px;top:710px;width:31px;height:18px;background:#e1e1e1"></div>
<div class="a" style="left:774px;top:710px;width:314px;height:18px;background:#e1e1e1"></div>
<div class="a" style="left:1089px;top:710px;width:130px;height:18px;background:#e1e1e1"></div>
<div class="a" style="left:1220px;top:710px;width:60px;height:18px;background:#e1e1e1"></div>
<div class="a" style="left:1281px;top:710px;width:44px;height:18px;background:#e1e1e1"></div>
<div class="a" style="left:1326px;top:710px;width:368px;height:18px;background:#e1e1e1"></div>
<div class="a tb" style="left:782px;top:713px;color:#000">Труба  электросварная прямошовная</div>
<div class="a" style="left:742px;top:729px;width:31px;height:18px;background:#e1e1e1"></div>
<div class="a" style="left:774px;top:729px;width:314px;height:18px;background:#e1e1e1"></div>
<div class="a" style="left:1089px;top:729px;width:130px;height:18px;background:#e1e1e1"></div>
<div class="a" style="left:1220px;top:729px;width:60px;height:18px;background:#e1e1e1"></div>
<div class="a" style="left:1281px;top:729px;width:44px;height:18px;background:#e1e1e1"></div>
<div class="a" style="left:1326px;top:729px;width:368px;height:18px;background:#e1e1e1"></div>
<div class="a tb" style="left:782px;top:732px;color:#000">Труба</div>
<div class="a" style="left:742px;top:748px;width:31px;height:18px;background:#e1e1e1"></div>
<div class="a" style="left:774px;top:748px;width:314px;height:18px;background:#ffffff"></div>
<div class="a" style="left:1089px;top:748px;width:130px;height:18px;background:#ffffff"></div>
<div class="a" style="left:1220px;top:748px;width:60px;height:18px;background:#ffffff"></div>
<div class="a" style="left:1281px;top:748px;width:44px;height:18px;background:#ffffff"></div>
<div class="a" style="left:1326px;top:748px;width:368px;height:18px;background:#e1e1e1"></div>
<div class="a t11" style="left:782px;top:750px;color:#000">Труба электросварная прямошовная 1020x14</div>
<div class="a t11" style="left:1227px;top:750px;color:#000">09Г2С</div>
<div class="a t11" style="left:1289px;top:750px;color:#000">350...</div>
<div class="a" style="left:742px;top:767px;width:31px;height:18px;background:#e1e1e1"></div>
<div class="a" style="left:774px;top:767px;width:314px;height:18px;background:#ffffff"></div>
<div class="a" style="left:1089px;top:767px;width:130px;height:18px;background:#ffffff"></div>
<div class="a" style="left:1220px;top:767px;width:60px;height:18px;background:#ffffff"></div>
<div class="a" style="left:1281px;top:767px;width:44px;height:18px;background:#ffffff"></div>
<div class="a" style="left:1326px;top:767px;width:368px;height:18px;background:#e1e1e1"></div>
<div class="a t11" style="left:782px;top:769px;color:#000">Труба электросварная прямошовная 820x12</div>
<div class="a t11" style="left:1227px;top:769px;color:#000">09Г2С</div>
<div class="a t11" style="left:1289px;top:769px;color:#000">241</div>
<div class="a" style="left:742px;top:786px;width:31px;height:18px;background:#e1e1e1"></div>
<div class="a" style="left:774px;top:786px;width:314px;height:18px;background:#e1e1e1"></div>
<div class="a" style="left:1089px;top:786px;width:130px;height:18px;background:#e1e1e1"></div>
<div class="a" style="left:1220px;top:786px;width:60px;height:18px;background:#e1e1e1"></div>
<div class="a" style="left:1281px;top:786px;width:44px;height:18px;background:#e1e1e1"></div>
<div class="a" style="left:1326px;top:786px;width:368px;height:18px;background:#e1e1e1"></div>
<div class="a tb" style="left:782px;top:789px;color:#000">Опоры трубопроводов</div>
<div class="a" style="left:742px;top:805px;width:31px;height:18px;background:#e1e1e1"></div>
<div class="a" style="left:774px;top:805px;width:314px;height:18px;background:#e1e1e1"></div>
<div class="a" style="left:1089px;top:805px;width:130px;height:18px;background:#e1e1e1"></div>
<div class="a" style="left:1220px;top:805px;width:60px;height:18px;background:#e1e1e1"></div>
<div class="a" style="left:1281px;top:805px;width:44px;height:18px;background:#e1e1e1"></div>
<div class="a" style="left:1326px;top:805px;width:368px;height:18px;background:#e1e1e1"></div>
<div class="a tb" style="left:782px;top:808px;color:#000">Опора катковая направляющая - КН</div>
<div class="a" style="left:742px;top:824px;width:31px;height:18px;background:#e1e1e1"></div>
<div class="a" style="left:774px;top:824px;width:314px;height:18px;background:#e1e1e1"></div>
<div class="a" style="left:1089px;top:824px;width:130px;height:18px;background:#e1e1e1"></div>
<div class="a" style="left:1220px;top:824px;width:60px;height:18px;background:#e1e1e1"></div>
<div class="a" style="left:1281px;top:824px;width:44px;height:18px;background:#e1e1e1"></div>
<div class="a" style="left:1326px;top:824px;width:368px;height:18px;background:#e1e1e1"></div>
<div class="a tb" style="left:782px;top:827px;color:#000">Опора</div>
<div class="a" style="left:742px;top:843px;width:31px;height:18px;background:#0078d7"></div>
<div class="a" style="left:774px;top:843px;width:314px;height:18px;background:#0078d7"></div>
<div class="a" style="left:1089px;top:843px;width:130px;height:18px;background:#0078d7"></div>
<div class="a" style="left:1220px;top:843px;width:60px;height:18px;background:#0078d7"></div>
<div class="a" style="left:1281px;top:843px;width:44px;height:18px;background:#0078d7"></div>
<div class="a" style="left:1326px;top:843px;width:368px;height:18px;background:#0078d7"></div>
<div class="a t11" style="left:782px;top:845px;color:#fff">Опора катковая направляющая стальных технологичес...</div>
<div class="a t11" style="left:1227px;top:845px;color:#fff">09Г2С</div>
<div class="a t11" style="left:1289px;top:845px;color:#fff">63.5</div>
<div class="a" style="left:742px;top:862px;width:31px;height:18px;background:#e1e1e1"></div>
<div class="a" style="left:774px;top:862px;width:314px;height:18px;background:#ffffff"></div>
<div class="a" style="left:1089px;top:862px;width:130px;height:18px;background:#ffffff"></div>
<div class="a" style="left:1220px;top:862px;width:60px;height:18px;background:#ffffff"></div>
<div class="a" style="left:1281px;top:862px;width:44px;height:18px;background:#ffffff"></div>
<div class="a" style="left:1326px;top:862px;width:368px;height:18px;background:#e1e1e1"></div>
<div class="a t11" style="left:782px;top:864px;color:#000">Опора катковая направляющая стальных технологичес...</div>
<div class="a t11" style="left:1098px;top:864px;color:#000">Направляющая опора</div>
<div class="a t11" style="left:1227px;top:864px;color:#000">09Г2С</div>
<div class="a t11" style="left:1289px;top:864px;color:#000">95</div>
<div class="a" style="left:742px;top:842px;width:952px;height:1px;background:#9be0ff"></div>
<div class="a" style="left:742px;top:861px;width:952px;height:1px;background:#9be0ff"></div>
<div class="a" style="left:772px;top:881px;width:1px;height:13px;background:#f0f0f0"></div>
<div class="a" style="left:1088px;top:881px;width:1px;height:13px;background:#f0f0f0"></div>
<div class="a" style="left:1218px;top:881px;width:1px;height:13px;background:#f0f0f0"></div>
<div class="a" style="left:1280px;top:881px;width:1px;height:13px;background:#f0f0f0"></div>
<div class="a" style="left:1325px;top:881px;width:1px;height:13px;background:#f0f0f0"></div>
<div class="a" style="left:1695px;top:458px;width:16px;height:437px;background:#f0f0f0"></div>
<div class="a" style="left:1696px;top:564px;width:15px;height:314px;background:#cdcdcd"></div>
<svg class="a" style="left:1698px;top:463px" width="10" height="8" viewBox="0 0 10 8"><path d="M1.5 6 L5 2.5 L8.5 6" stroke="#606060" stroke-width="1.8" fill="none"/></svg>
<svg class="a" style="left:1698px;top:882px" width="10" height="8" viewBox="0 0 10 8"><path d="M1.5 2 L5 5.5 L8.5 2" stroke="#606060" stroke-width="1.3" fill="none"/></svg>
<div class="a" style="left:738px;top:895px;width:957px;height:16px;background:#f0f0f0"></div>
<div class="a" style="left:755px;top:895px;width:712px;height:15px;background:#cdcdcd"></div>
<svg class="a" style="left:741px;top:898px" width="8" height="10" viewBox="0 0 8 10"><path d="M6 1.5 L2.5 5 L6 8.5" stroke="#606060" stroke-width="1.8" fill="none"/></svg>
<svg class="a" style="left:1682px;top:898px" width="8" height="10" viewBox="0 0 8 10"><path d="M2 1.5 L5.5 5 L2 8.5" stroke="#606060" stroke-width="1.3" fill="none"/></svg>
</div>
<svg class="a" style="left:740px;top:432px" width="16" height="18" viewBox="0 0 16 18">
  <text x="2.2" y="7.8" font-family="Liberation Sans" font-weight="bold" font-size="7.5" fill="#1a5ea8">1</text>
  <text x="2" y="15.8" font-family="Liberation Sans" font-weight="bold" font-size="8" fill="#c01818">2</text>
  <path d="M11.5 2 V15.5" stroke="#000" stroke-width="1.2"/>
  <path d="M9 12 L11.5 16 L14 12" stroke="#000" stroke-width="1.2" fill="none"/>
</svg>
<svg class="a" style="left:763px;top:434px" width="17" height="16" viewBox="0 0 17 16">
  <rect x="3" y="1" width="12" height="13" fill="#c8f4ff" stroke="#1a5ea8" stroke-width="1.2"/>
  <path d="M3 4.3h12M3 7.5h12M3 10.7h12M7 1v13M11 1v13" stroke="#1a5ea8" stroke-width="1.1"/>
  <path d="M6.5 4.5 Q2 4.5 2 9 M1 12 Q1.5 14.5 6 14" stroke="#f0fff0" stroke-width="3" fill="none"/>
  <path d="M6.5 4.5 Q2 4.5 2 9 M2.5 11.5 Q3 14.5 6.5 14" stroke="#10901a" stroke-width="1.6" fill="none" stroke-dasharray="2 .8"/>
  <path d="M5 3 L7.5 4.5 L5 6.5 Z M4 12.5 L1.5 13.8 L4 15.5Z" fill="#10901a"/>
</svg>
<svg class="a" style="left:786px;top:434px" width="17" height="16" viewBox="0 0 17 16">
  <rect x="3.5" y="1" width="12" height="13" fill="#c8f4ff" stroke="#1a5ea8" stroke-width="1.2"/>
  <path d="M3.5 4.3h12M3.5 7.5h12M3.5 10.7h12M7.5 1v13M11.5 1v13" stroke="#1a5ea8" stroke-width="1.1"/>
  <rect x="0.5" y="6" width="9" height="9" fill="#d07810" stroke="#fff0c0" stroke-width=".6"/>
  <rect x="1.8" y="6.5" width="6.5" height="3.5" fill="#fff8e0"/>
  <rect x="4" y="11.5" width="3.5" height="2.5" fill="#000"/>
</svg>
<svg class="a" style="left:817px;top:433px" width="18" height="16" viewBox="0 0 18 16">
  <rect x="9" y="1" width="7" height="5" fill="#60c8f0"/>
  <path d="M10 1.5 h6 v4" stroke="#2080c0" stroke-width="1" fill="none"/>
  <rect x="2" y="11" width="15" height="4" fill="#fff" stroke="#b0b0b0" stroke-width=".8"/>
  <path d="M7 11 v4 M12 11 v4" stroke="#b0b0b0" stroke-width=".8"/>
  <path d="M8 5 Q3 5 3.5 12" stroke="#2030a0" stroke-width="1.5" fill="none"/>
  <path d="M6.5 3 L9 5 L6.5 7Z" fill="#2030a0"/>
  <rect x="1" y="11.5" width="4" height="3" fill="#2030a0"/>
</svg>
<svg class="a" style="left:840px;top:433px" width="18" height="16" viewBox="0 0 18 16">
  <path d="M1 1 h9 l2 2 v12 h-11z" fill="#f4f4f4" stroke="#404860" stroke-width="1"/>
  <path d="M1 3 h2 M1 6 h2 M1 9 h2 M1 12h2" stroke="#404860" stroke-width="1"/>
  <circle cx="9" cy="7" r="3.8" fill="#e8f0f8" stroke="#707070" stroke-width="1.2"/>
  <path d="M11.5 9.5 L15.5 13.5" stroke="#c08030" stroke-width="2.4"/>
</svg>
<svg class="a" style="left:871px;top:433px" width="18" height="16" viewBox="0 0 18 16">
  <rect x="1" y="5" width="13" height="10" fill="#f8f8f8" stroke="#505050" stroke-width="1"/>
  <rect x="1.5" y="5.5" width="12" height="2.5" fill="#8ab0e0"/>
  <path d="M3 10h3M7 10h5M3 12.5h3M7 12.5h5" stroke="#8090b0" stroke-width="1"/>
  <path d="M6 6 L10 1 H16 L17 4 L14 8 H9Z" fill="#e8c050"/>
  <path d="M6 6 L10 1 M8 7 L12 2" stroke="#a08020" stroke-width=".8"/>
  <path d="M15 1 L17.5 0.5 V6 L15 5Z" fill="#40a040"/>
</svg>
<svg class="a" style="left:894px;top:433px" width="17" height="16" viewBox="0 0 17 16">
  <rect x="4.5" y="1" width="11" height="13.5" fill="#c8f4ff" stroke="#1a5ea8" stroke-width="1.2"/>
  <path d="M4.5 4.3h11M4.5 7.5h11M4.5 10.7h11M8.5 1v13.5M12 1v13.5" stroke="#1a5ea8" stroke-width="1.1"/>
  <path d="M1.5 15 L8 8.5" stroke="#fff" stroke-width="4"/>
  <path d="M2 14.5 L7 9.5" stroke="#e82030" stroke-width="2.4"/>
  <path d="M3.5 8 H9 V13.5Z" fill="#e82030"/>
</svg>
<div id="dropdown">
<div class="a" style="left:1218px;top:388px;width:5px;height:453px;background:linear-gradient(90deg,rgba(0,0,0,.28),rgba(0,0,0,.12) 40%,rgba(0,0,0,0))"></div>
<div class="a" style="left:1088px;top:384px;width:130px;height:457px;background:#fff;border:1px solid #4a90c8;overflow:hidden">
<div class="a dd" style="left:2px;top:0px">Участок</div>
<div class="a dd" style="left:2px;top:13px">Арматура</div>
<div class="a dd" style="left:2px;top:26px">Фланец</div>
<div class="a dd" style="left:2px;top:39px">Заглушка</div>
<div class="a dd" style="left:2px;top:52px">Отвод</div>
<div class="a dd" style="left:2px;top:65px">Изогнутый участок</div>
<div class="a dd" style="left:2px;top:78px">Упруго-изогнутый участок</div>
<div class="a dd" style="left:2px;top:91px">Косой стык</div>
<div class="a dd" style="left:2px;top:104px">Переход эксцентрический</div>
<div class="a dd" style="left:2px;top:117px">Переход концентрический</div>
<div class="a dd" style="left:2px;top:130px">Тройник сварной</div>
<div class="a dd" style="left:2px;top:143px">Тройник штампованый</div>
<div class="a dd" style="left:2px;top:156px">Тройник нестандартный</div>
<div class="a dd" style="left:2px;top:169px">Врезка</div>
<div class="a dd" style="left:2px;top:182px">Балласт</div>
<div class="a dd" style="left:2px;top:195px">Компенсатор осевой</div>
<div class="a dd" style="left:2px;top:208px">Компенсатор сдвиговый</div>
<div class="a dd" style="left:2px;top:221px">Компенсатор угловой</div>
<div class="a dd" style="left:2px;top:234px">Нестандартный компенсатор</div>
<div class="a dd" style="left:2px;top:247px">Деформация</div>
<div class="a dd" style="left:2px;top:260px">Мертвая опора</div>
<div class="a dd" style="left:2px;top:273px">Маркер опора</div>
<div class="a dd" style="left:2px;top:286px">Нестандартное крепление</div>
<div class="a dd" style="left:2px;top:299px">Скользящая опора</div>
<div class="a dd" style="left:2px;top:312px">Неподвижная опора</div>
<div class="a" style="left:1px;top:326px;width:126px;height:13px;background:#0078d7"></div>
<div class="a dd" style="left:2px;top:325px;color:#fff">Направляющая опора</div>
<div class="a dd" style="left:2px;top:338px">Направляющая опора2</div>
<div class="a dd" style="left:2px;top:351px">Опора постоянного усилия</div>
<div class="a dd" style="left:2px;top:364px">Жесткая подвеска</div>
<div class="a dd" style="left:2px;top:377px">Пружинная опора</div>
<div class="a dd" style="left:2px;top:390px">Пружинная подвеска</div>
<div class="a dd" style="left:2px;top:403px">Грунт</div>
<div class="a dd" style="left:2px;top:416px">Материал</div>
<div class="a dd" style="left:2px;top:429px">Узел</div>
</div>
<div class="a" style="left:1088px;top:841px;width:130px;height:23px;background:#fff;border:1px solid #3a86c8"></div>
<div class="a" style="left:1091px;top:844px;width:107px;height:13px;background:#0078d7"></div>
<div class="a dd" style="left:1091px;top:844px;color:#fff;width:107px;overflow:hidden">Направляющая опора</div>
<div class="a" style="left:1201px;top:842px;width:16px;height:21px;background:#cce4f7;border-left:1px solid #8ab8e0"></div>
<svg class="a" style="left:1204px;top:849px" width="10" height="7" viewBox="0 0 10 7"><path d="M1.5 1.5 L5 5 L8.5 1.5" stroke="#505050" stroke-width="1.2" fill="none"/></svg>
<svg class="a" style="left:1209px;top:852px" width="14" height="22" viewBox="0 0 14 22"><path d="M1 1 V17 L4.5 13.5 L7.5 20.5 L10 19.5 L7 12.5 H12 Z" fill="#fff" stroke="#000" stroke-width="1" stroke-linejoin="miter"/></svg>
</div>
</body></html>
